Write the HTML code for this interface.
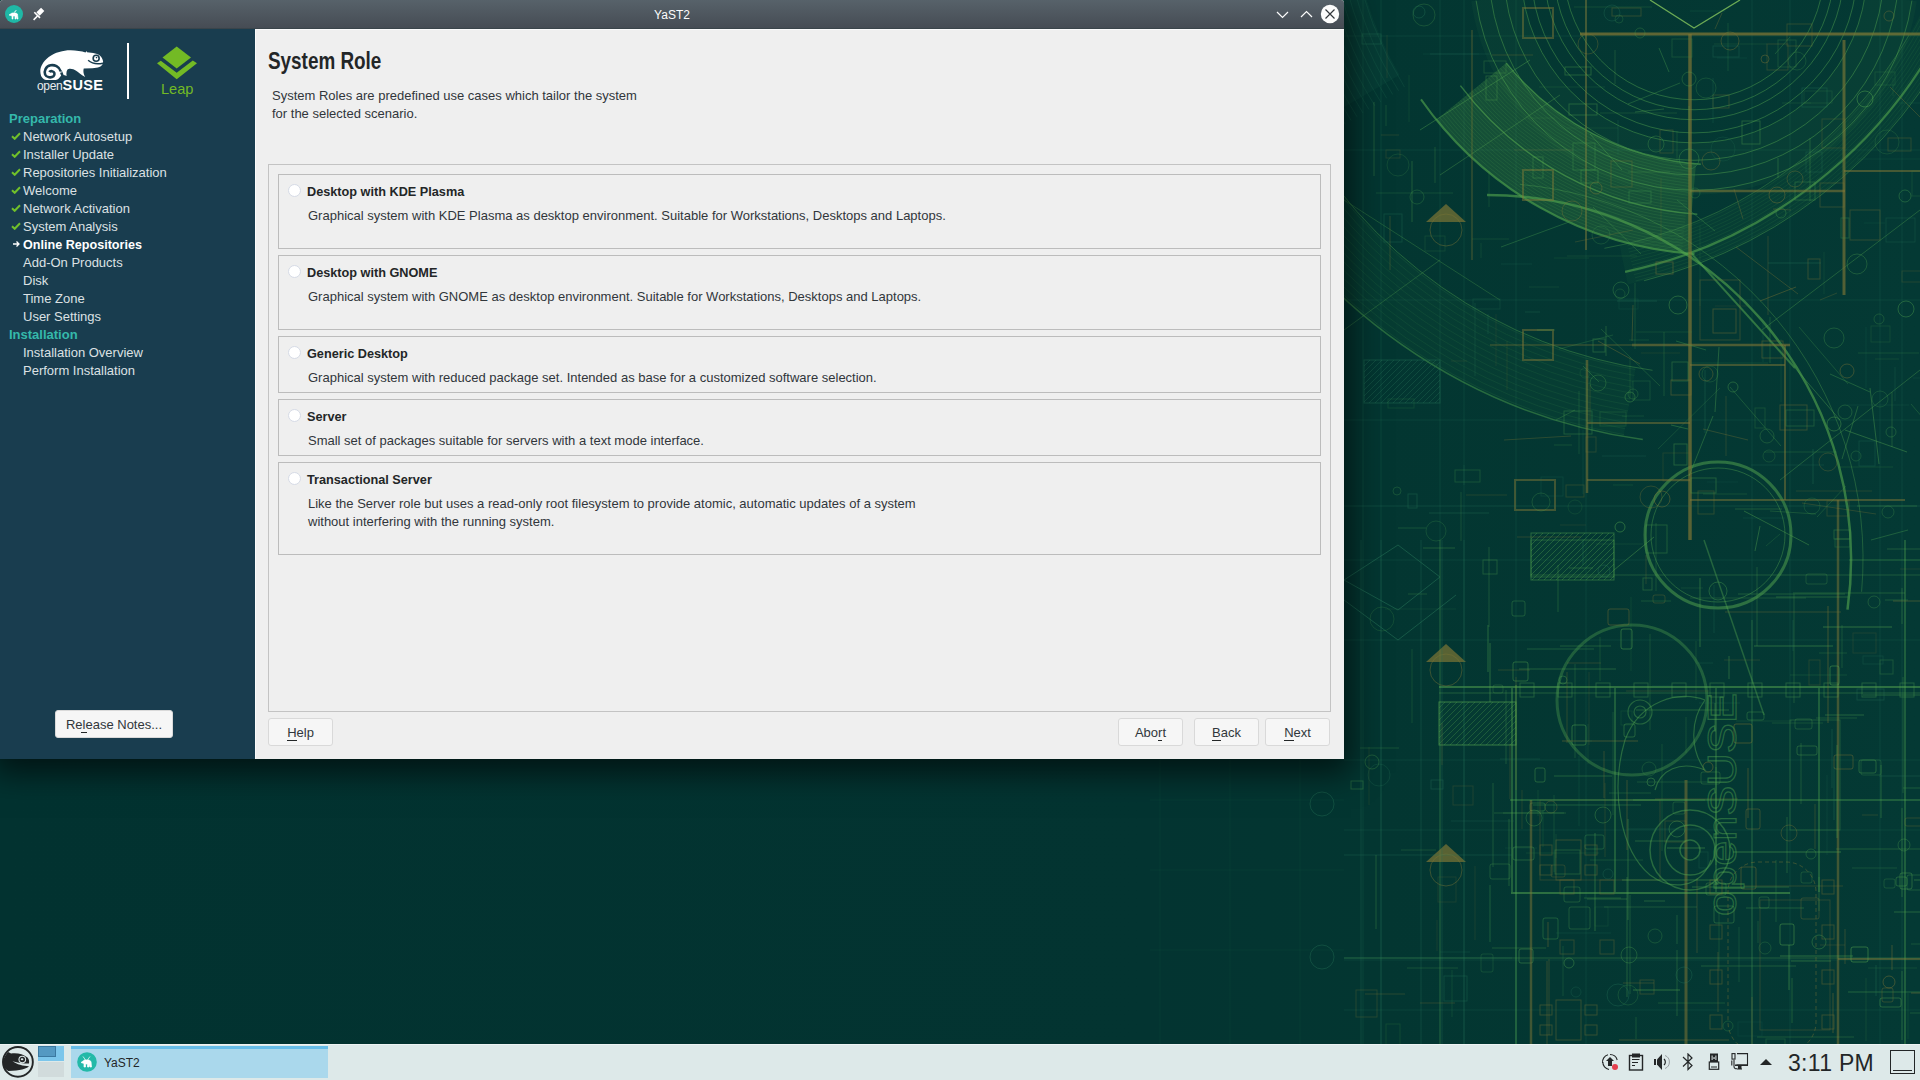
<!DOCTYPE html>
<html><head><meta charset="utf-8">
<style>
*{margin:0;padding:0;box-sizing:border-box}
html,body{width:1920px;height:1080px;overflow:hidden}
body{position:relative;background:#03312f;font-family:"Liberation Sans",sans-serif;font-size:13px;color:#31363b}
#wall{position:absolute;left:0;top:0;width:1920px;height:1044px}
#shadow{position:absolute;left:0;top:0;width:1344px;height:759px;box-shadow:0 7px 30px 7px rgba(0,0,0,0.6)}
#win{position:absolute;left:0;top:0;width:1344px;height:759px;background:#efefef;border-radius:3px 3px 0 0;overflow:hidden}
#tb{position:absolute;left:0;top:0;width:1344px;height:29px;background:linear-gradient(#57626a,#464c54);border-bottom:1px solid #3a444a}
#tb .title{position:absolute;left:0;width:1344px;top:0px;height:28px;line-height:30px;text-align:center;color:#fcfcfc;font-size:12px}
#side{position:absolute;left:0;top:29px;width:255px;height:730px;background:#193d4f}
#main{position:absolute;left:255px;top:29px;width:1089px;height:730px;background:#efefef;border-top:1px solid #fafafa;border-left:1px solid #fafafa}
.nav{position:absolute;padding-top:1px;left:23px;color:#dce1e4;font-size:13px;line-height:18px;white-space:nowrap}
.hd{position:absolute;padding-top:1px;left:9px;color:#35b9ab;font-weight:bold;font-size:13px;line-height:18px}
.cur{color:#fff;font-weight:bold;font-size:12.6px}
.chk{position:absolute;left:11px;width:10px;height:8px}
.frame{position:absolute;left:268px;top:164px;width:1063px;height:548px;border:1px solid #c3c3c3}
.box{position:absolute;left:278px;width:1043px;border:1px solid #bcbcbc}
.radio{position:absolute;left:288px;width:13px;height:13px;border-radius:50%;background:#fff;border:1px solid #d6dbe6}
.rt{position:absolute;padding-top:1px;left:307px;font-weight:bold;font-size:12.7px;color:#232627;line-height:18px;white-space:nowrap}
.rd{position:absolute;padding-top:1px;left:308px;color:#31363b;line-height:18px;white-space:nowrap}
.btn{position:absolute;height:28px;width:65px;background:#f6f6f6;border:1px solid #d9d9d9;border-radius:3px;text-align:center;line-height:27px;color:#31363b}
.btn u{text-decoration:none;display:inline-block;border-bottom:1px solid #232627;line-height:14px}
#task{position:absolute;left:0;top:1044px;width:1920px;height:36px;background:#dde9e9}
</style></head><body>
<svg id="wall" width="1920" height="1044" viewBox="0 0 1920 1044">
<defs>
<linearGradient id="bgg" x1="0" y1="0" x2="1920" y2="0" gradientUnits="userSpaceOnUse">
<stop offset="0" stop-color="#023230"/><stop offset="0.6" stop-color="#033431"/><stop offset="0.72" stop-color="#033631"/><stop offset="1" stop-color="#043934"/>
</linearGradient>
</defs>
<rect width="1920" height="1044" fill="url(#bgg)"/>
<clipPath id="cp1531_540"><rect x="1531" y="540" width="83" height="37"/></clipPath>
<clipPath id="cp1439_702"><rect x="1439" y="702" width="77" height="43"/></clipPath>
<clipPath id="cp1364_360"><rect x="1364" y="360" width="76" height="43"/></clipPath>
<clipPath id="cp1531_533"><rect x="1531" y="533" width="83" height="47"/></clipPath>
<line x1="1363" y1="0" x2="1363" y2="1044" stroke="#2a7a5c" stroke-width="1" stroke-opacity="0.22"/>
<line x1="1381" y1="0" x2="1381" y2="1044" stroke="#2a7a5c" stroke-width="1" stroke-opacity="0.22"/>
<line x1="1440" y1="0" x2="1440" y2="1044" stroke="#2a7a5c" stroke-width="1" stroke-opacity="0.22"/>
<line x1="1464" y1="0" x2="1464" y2="1044" stroke="#2a7a5c" stroke-width="1" stroke-opacity="0.22"/>
<line x1="1516" y1="0" x2="1516" y2="1044" stroke="#2a7a5c" stroke-width="1" stroke-opacity="0.22"/>
<line x1="1586" y1="0" x2="1586" y2="1044" stroke="#2a7a5c" stroke-width="1" stroke-opacity="0.22"/>
<line x1="1752" y1="0" x2="1752" y2="1044" stroke="#2a7a5c" stroke-width="1" stroke-opacity="0.22"/>
<line x1="1790" y1="0" x2="1790" y2="1044" stroke="#2a7a5c" stroke-width="1" stroke-opacity="0.22"/>
<line x1="1880" y1="0" x2="1880" y2="1044" stroke="#2a7a5c" stroke-width="1" stroke-opacity="0.22"/>
<line x1="1902" y1="0" x2="1902" y2="1044" stroke="#2a7a5c" stroke-width="1" stroke-opacity="0.22"/>
<line x1="1344" y1="36" x2="1920" y2="36" stroke="#2a7a5c" stroke-width="1" stroke-opacity="0.2"/>
<line x1="1344" y1="150" x2="1920" y2="150" stroke="#2a7a5c" stroke-width="1" stroke-opacity="0.2"/>
<line x1="1344" y1="300" x2="1920" y2="300" stroke="#2a7a5c" stroke-width="1" stroke-opacity="0.2"/>
<line x1="1344" y1="420" x2="1920" y2="420" stroke="#2a7a5c" stroke-width="1" stroke-opacity="0.2"/>
<line x1="1344" y1="560" x2="1920" y2="560" stroke="#2a7a5c" stroke-width="1" stroke-opacity="0.2"/>
<line x1="1344" y1="640" x2="1920" y2="640" stroke="#2a7a5c" stroke-width="1" stroke-opacity="0.2"/>
<line x1="1344" y1="760" x2="1920" y2="760" stroke="#2a7a5c" stroke-width="1" stroke-opacity="0.2"/>
<line x1="1344" y1="830" x2="1920" y2="830" stroke="#2a7a5c" stroke-width="1" stroke-opacity="0.2"/>
<line x1="1344" y1="960" x2="1920" y2="960" stroke="#2a7a5c" stroke-width="1" stroke-opacity="0.2"/>
<line x1="1344" y1="1010" x2="1920" y2="1010" stroke="#2a7a5c" stroke-width="1" stroke-opacity="0.2"/>
<line x1="1160" y1="760" x2="1160" y2="1044" stroke="#2a7a5c" stroke-width="1" stroke-opacity="0.1"/>
<line x1="1230" y1="760" x2="1230" y2="1044" stroke="#2a7a5c" stroke-width="1" stroke-opacity="0.1"/>
<line x1="1300" y1="760" x2="1300" y2="1044" stroke="#2a7a5c" stroke-width="1" stroke-opacity="0.1"/>
<line x1="1150" y1="800" x2="1344" y2="800" stroke="#2a7a5c" stroke-width="1" stroke-opacity="0.1"/>
<line x1="1150" y1="870" x2="1344" y2="870" stroke="#2a7a5c" stroke-width="1" stroke-opacity="0.1"/>
<line x1="1150" y1="950" x2="1344" y2="950" stroke="#2a7a5c" stroke-width="1" stroke-opacity="0.1"/>
<circle cx="1322" cy="804" r="12" fill="none" stroke="#2a7a5c" stroke-width="1" stroke-opacity="0.35"/>
<circle cx="1322" cy="957" r="12" fill="none" stroke="#2a7a5c" stroke-width="1" stroke-opacity="0.35"/>
<path d="M1399.6 75.0 A370 370 0 0 1 1355.6 -45.8 L1276.8 -31.9 A450 450 0 0 0 1330.3 115.0 Z" fill="#2a7a5c" fill-opacity="0.1"/>
<path d="M1404.5 87.1 A372 372 0 0 1 1353.7 -45.4" fill="none" stroke="#2a7a5c" stroke-width="1" stroke-opacity="0.2"/>
<path d="M1398.6 90.8 A379 379 0 0 1 1346.8 -44.2" fill="none" stroke="#2a7a5c" stroke-width="1" stroke-opacity="0.2"/>
<path d="M1392.7 94.5 A386 386 0 0 1 1339.9 -43.0" fill="none" stroke="#2a7a5c" stroke-width="1" stroke-opacity="0.2"/>
<path d="M1386.7 98.3 A393 393 0 0 1 1333.0 -41.8" fill="none" stroke="#2a7a5c" stroke-width="1" stroke-opacity="0.2"/>
<path d="M1380.8 102.0 A400 400 0 0 1 1326.1 -40.5" fill="none" stroke="#2a7a5c" stroke-width="1" stroke-opacity="0.2"/>
<path d="M1374.8 105.7 A407 407 0 0 1 1319.2 -39.3" fill="none" stroke="#2a7a5c" stroke-width="1" stroke-opacity="0.2"/>
<path d="M1368.9 109.4 A414 414 0 0 1 1312.3 -38.1" fill="none" stroke="#2a7a5c" stroke-width="1" stroke-opacity="0.2"/>
<path d="M1363.0 113.1 A421 421 0 0 1 1305.4 -36.9" fill="none" stroke="#2a7a5c" stroke-width="1" stroke-opacity="0.2"/>
<path d="M1357.0 116.8 A428 428 0 0 1 1298.5 -35.7" fill="none" stroke="#2a7a5c" stroke-width="1" stroke-opacity="0.2"/>
<path d="M1351.1 120.5 A435 435 0 0 1 1291.6 -34.5" fill="none" stroke="#2a7a5c" stroke-width="1" stroke-opacity="0.2"/>
<path d="M1345.2 124.2 A442 442 0 0 1 1284.7 -33.2" fill="none" stroke="#2a7a5c" stroke-width="1" stroke-opacity="0.2"/>
<path d="M1339.2 127.9 A449 449 0 0 1 1277.8 -32.0" fill="none" stroke="#2a7a5c" stroke-width="1" stroke-opacity="0.2"/>
<path d="M1696.0 164.0 A275 275 0 0 1 1506.3 63.1 L1436.3 119.7 A365 365 0 0 0 1688.2 253.6 Z" fill="#55a84f" fill-opacity="0.16"/>
<path d="M1691.0 165.5 A277 277 0 0 1 1504.7 64.3" fill="none" stroke="#3f8f4a" stroke-width="1" stroke-opacity="0.22"/>
<path d="M1690.7 168.5 A280 280 0 0 1 1502.4 66.2" fill="none" stroke="#3f8f4a" stroke-width="1" stroke-opacity="0.22"/>
<path d="M1690.4 171.4 A283 283 0 0 1 1500.1 68.1" fill="none" stroke="#3f8f4a" stroke-width="1" stroke-opacity="0.22"/>
<path d="M1690.1 174.4 A286 286 0 0 1 1497.7 70.0" fill="none" stroke="#3f8f4a" stroke-width="1" stroke-opacity="0.22"/>
<path d="M1689.8 177.4 A289 289 0 0 1 1495.4 71.9" fill="none" stroke="#3f8f4a" stroke-width="1" stroke-opacity="0.22"/>
<path d="M1689.5 180.4 A292 292 0 0 1 1493.1 73.8" fill="none" stroke="#3f8f4a" stroke-width="1" stroke-opacity="0.22"/>
<path d="M1689.2 183.4 A295 295 0 0 1 1490.7 75.6" fill="none" stroke="#3f8f4a" stroke-width="1" stroke-opacity="0.22"/>
<path d="M1688.9 186.4 A298 298 0 0 1 1488.4 77.5" fill="none" stroke="#3f8f4a" stroke-width="1" stroke-opacity="0.22"/>
<path d="M1688.5 189.4 A301 301 0 0 1 1486.1 79.4" fill="none" stroke="#3f8f4a" stroke-width="1" stroke-opacity="0.22"/>
<path d="M1688.2 192.3 A304 304 0 0 1 1483.7 81.3" fill="none" stroke="#3f8f4a" stroke-width="1" stroke-opacity="0.22"/>
<path d="M1687.9 195.3 A307 307 0 0 1 1481.4 83.2" fill="none" stroke="#3f8f4a" stroke-width="1" stroke-opacity="0.22"/>
<path d="M1687.6 198.3 A310 310 0 0 1 1479.1 85.1" fill="none" stroke="#3f8f4a" stroke-width="1" stroke-opacity="0.22"/>
<path d="M1687.3 201.3 A313 313 0 0 1 1476.8 87.0" fill="none" stroke="#3f8f4a" stroke-width="1" stroke-opacity="0.22"/>
<path d="M1687.0 204.3 A316 316 0 0 1 1474.4 88.9" fill="none" stroke="#3f8f4a" stroke-width="1" stroke-opacity="0.22"/>
<path d="M1686.7 207.3 A319 319 0 0 1 1472.1 90.8" fill="none" stroke="#3f8f4a" stroke-width="1" stroke-opacity="0.22"/>
<path d="M1686.3 210.2 A322 322 0 0 1 1469.8 92.6" fill="none" stroke="#3f8f4a" stroke-width="1" stroke-opacity="0.22"/>
<path d="M1686.0 213.2 A325 325 0 0 1 1467.4 94.5" fill="none" stroke="#3f8f4a" stroke-width="1" stroke-opacity="0.22"/>
<path d="M1685.7 216.2 A328 328 0 0 1 1465.1 96.4" fill="none" stroke="#3f8f4a" stroke-width="1" stroke-opacity="0.22"/>
<path d="M1685.4 219.2 A331 331 0 0 1 1462.8 98.3" fill="none" stroke="#3f8f4a" stroke-width="1" stroke-opacity="0.22"/>
<path d="M1685.1 222.2 A334 334 0 0 1 1460.4 100.2" fill="none" stroke="#3f8f4a" stroke-width="1" stroke-opacity="0.22"/>
<path d="M1684.8 225.2 A337 337 0 0 1 1458.1 102.1" fill="none" stroke="#3f8f4a" stroke-width="1" stroke-opacity="0.22"/>
<path d="M1684.5 228.1 A340 340 0 0 1 1455.8 104.0" fill="none" stroke="#3f8f4a" stroke-width="1" stroke-opacity="0.22"/>
<path d="M1684.1 231.1 A343 343 0 0 1 1453.4 105.9" fill="none" stroke="#3f8f4a" stroke-width="1" stroke-opacity="0.22"/>
<path d="M1683.8 234.1 A346 346 0 0 1 1451.1 107.7" fill="none" stroke="#3f8f4a" stroke-width="1" stroke-opacity="0.22"/>
<path d="M1683.5 237.1 A349 349 0 0 1 1448.8 109.6" fill="none" stroke="#3f8f4a" stroke-width="1" stroke-opacity="0.22"/>
<path d="M1683.2 240.1 A352 352 0 0 1 1446.4 111.5" fill="none" stroke="#3f8f4a" stroke-width="1" stroke-opacity="0.22"/>
<path d="M1682.9 243.1 A355 355 0 0 1 1444.1 113.4" fill="none" stroke="#3f8f4a" stroke-width="1" stroke-opacity="0.22"/>
<path d="M1682.6 246.0 A358 358 0 0 1 1441.8 115.3" fill="none" stroke="#3f8f4a" stroke-width="1" stroke-opacity="0.22"/>
<path d="M1682.3 249.0 A361 361 0 0 1 1439.5 117.2" fill="none" stroke="#3f8f4a" stroke-width="1" stroke-opacity="0.22"/>
<path d="M1682.0 252.0 A364 364 0 0 1 1437.1 119.1" fill="none" stroke="#3f8f4a" stroke-width="1" stroke-opacity="0.22"/>
<path d="M1700.8 164.3 A275 275 0 0 1 1506.3 63.1" fill="none" stroke="#55a84f" stroke-width="1.5" stroke-opacity="0.6"/>
<path d="M1697.3 214.2 A325 325 0 0 1 1460.4 85.6" fill="none" stroke="#55a84f" stroke-width="1.5" stroke-opacity="0.55"/>
<path d="M1694.5 254.1 A365 365 0 0 1 1421.0 99.4" fill="none" stroke="#55a84f" stroke-width="2" stroke-opacity="0.6"/>
<path d="M1635.8 367.6 A485 485 0 0 1 1300.0 132.5 L1239.4 167.5 A555 555 0 0 0 1623.6 436.6 Z" fill="#55a84f" fill-opacity="0.05"/>
<path d="M1635.4 369.6 A487 487 0 0 1 1298.2 133.5" fill="none" stroke="#3f8f4a" stroke-width="1" stroke-opacity="0.15"/>
<path d="M1634.4 375.5 A493 493 0 0 1 1293.0 136.5" fill="none" stroke="#3f8f4a" stroke-width="1" stroke-opacity="0.15"/>
<path d="M1633.3 381.4 A499 499 0 0 1 1287.9 139.5" fill="none" stroke="#3f8f4a" stroke-width="1" stroke-opacity="0.15"/>
<path d="M1632.3 387.3 A505 505 0 0 1 1282.7 142.5" fill="none" stroke="#3f8f4a" stroke-width="1" stroke-opacity="0.15"/>
<path d="M1631.3 393.2 A511 511 0 0 1 1277.5 145.5" fill="none" stroke="#3f8f4a" stroke-width="1" stroke-opacity="0.15"/>
<path d="M1630.2 399.1 A517 517 0 0 1 1272.3 148.5" fill="none" stroke="#3f8f4a" stroke-width="1" stroke-opacity="0.15"/>
<path d="M1629.2 405.1 A523 523 0 0 1 1267.1 151.5" fill="none" stroke="#3f8f4a" stroke-width="1" stroke-opacity="0.15"/>
<path d="M1628.1 411.0 A529 529 0 0 1 1261.9 154.5" fill="none" stroke="#3f8f4a" stroke-width="1" stroke-opacity="0.15"/>
<path d="M1627.1 416.9 A535 535 0 0 1 1256.7 157.5" fill="none" stroke="#3f8f4a" stroke-width="1" stroke-opacity="0.15"/>
<path d="M1626.1 422.8 A541 541 0 0 1 1251.5 160.5" fill="none" stroke="#3f8f4a" stroke-width="1" stroke-opacity="0.15"/>
<path d="M1625.0 428.7 A547 547 0 0 1 1246.3 163.5" fill="none" stroke="#3f8f4a" stroke-width="1" stroke-opacity="0.15"/>
<path d="M1624.0 434.6 A553 553 0 0 1 1241.1 166.5" fill="none" stroke="#3f8f4a" stroke-width="1" stroke-opacity="0.15"/>
<path d="M1642.8 439.6 A555 555 0 0 1 1230.0 150.6" fill="none" stroke="#55a84f" stroke-width="1.5" stroke-opacity="0.45"/>
<path d="M1652.5 370.3 A485 485 0 0 1 1291.8 117.7" fill="none" stroke="#55a84f" stroke-width="1" stroke-opacity="0.4"/>
<path d="M1822.7 -11.9 A130 130 0 0 1 1565.3 -11.9" fill="none" stroke="#55a84f" stroke-width="1" stroke-opacity="0.45"/>
<path d="M1832.6 -10.5 A140 140 0 0 1 1555.4 -10.5" fill="none" stroke="#55a84f" stroke-width="1" stroke-opacity="0.45"/>
<path d="M1842.5 -9.1 A150 150 0 0 1 1545.5 -9.1" fill="none" stroke="#55a84f" stroke-width="1" stroke-opacity="0.45"/>
<path d="M1855.4 -7.3 A163 163 0 0 1 1532.6 -7.3" fill="none" stroke="#55a84f" stroke-width="1" stroke-opacity="0.45"/>
<path d="M1865.3 -5.9 A173 173 0 0 1 1522.7 -5.9" fill="none" stroke="#55a84f" stroke-width="1" stroke-opacity="0.45"/>
<path d="M1882.2 -3.6 A190 190 0 0 1 1505.8 -3.6" fill="none" stroke="#55a84f" stroke-width="1" stroke-opacity="0.45"/>
<path d="M1897.0 -1.5 A205 205 0 0 1 1491.0 -1.5" fill="none" stroke="#55a84f" stroke-width="1" stroke-opacity="0.45"/>
<path d="M1911.9 0.6 A220 220 0 0 1 1476.1 0.6" fill="none" stroke="#55a84f" stroke-width="1" stroke-opacity="0.45"/>
<path d="M1961.0 -10.1 A467 467 0 0 1 1625.1 271.8" fill="none" stroke="#55a84f" stroke-width="2.2" stroke-opacity="0.6"/>
<path d="M1973.0 -5.2 A480 480 0 0 1 1644.1 280.7" fill="none" stroke="#55a84f" stroke-width="1" stroke-opacity="0.4"/>
<path d="M1909.1 35.0 A440 440 0 0 1 1604.4 248.3" fill="none" stroke="#55a84f" stroke-width="1" stroke-opacity="0.35"/>
<path d="M1487.0 195.0 A364 364 0 0 1 1847.5 609.7" fill="none" stroke="#55a84f" stroke-width="2.5" stroke-opacity="0.6"/>
<path d="M1519.8 184.4 A376 376 0 0 1 1861.6 591.8" fill="none" stroke="#55a84f" stroke-width="1" stroke-opacity="0.35"/>
<circle cx="1718" cy="535" r="73" fill="none" stroke="#55a84f" stroke-width="3" stroke-opacity="0.5"/>
<circle cx="1718" cy="535" r="67" fill="none" stroke="#55a84f" stroke-width="1" stroke-opacity="0.4"/>
<circle cx="1632" cy="700" r="75" fill="none" stroke="#55a84f" stroke-width="3" stroke-opacity="0.35"/>
<line x1="1691" y1="253" x2="1795" y2="368" stroke="#55a84f" stroke-width="2" stroke-opacity="0.55"/>
<line x1="1795" y1="368" x2="1840" y2="420" stroke="#55a84f" stroke-width="1" stroke-opacity="0.4"/>
<line x1="1704" y1="540" x2="1764" y2="715" stroke="#55a84f" stroke-width="1.5" stroke-opacity="0.4"/>
<line x1="1420" y1="130" x2="1530" y2="60" stroke="#55a84f" stroke-width="1" stroke-opacity="0.4"/>
<line x1="1440" y1="175" x2="1560" y2="95" stroke="#55a84f" stroke-width="1" stroke-opacity="0.35"/>
<line x1="1762" y1="330" x2="1920" y2="210" stroke="#55a84f" stroke-width="1" stroke-opacity="0.35"/>
<line x1="1780" y1="480" x2="1920" y2="370" stroke="#55a84f" stroke-width="1" stroke-opacity="0.35"/>
<line x1="1344" y1="200" x2="1500" y2="300" stroke="#55a84f" stroke-width="1" stroke-opacity="0.3"/>
<line x1="1344" y1="330" x2="1440" y2="260" stroke="#55a84f" stroke-width="1" stroke-opacity="0.3"/>
<line x1="1580" y1="34" x2="1920" y2="34" stroke="#7d7535" stroke-width="3" stroke-opacity="0.75"/>
<line x1="1690" y1="34" x2="1690" y2="540" stroke="#7d7535" stroke-width="3.5" stroke-opacity="0.7"/>
<line x1="1844" y1="40" x2="1844" y2="295" stroke="#7d7535" stroke-width="3" stroke-opacity="0.65"/>
<line x1="1690" y1="191" x2="1845" y2="191" stroke="#7d7535" stroke-width="2.5" stroke-opacity="0.6"/>
<line x1="1844" y1="171" x2="1920" y2="171" stroke="#7d7535" stroke-width="2" stroke-opacity="0.55"/>
<line x1="1586" y1="0" x2="1586" y2="250" stroke="#7d7535" stroke-width="2" stroke-opacity="0.5"/>
<line x1="1472" y1="30" x2="1472" y2="260" stroke="#7d7535" stroke-width="1.5" stroke-opacity="0.4"/>
<line x1="1632" y1="345" x2="1790" y2="345" stroke="#7d7535" stroke-width="2.5" stroke-opacity="0.6"/>
<line x1="1690" y1="365" x2="1785" y2="365" stroke="#7d7535" stroke-width="2" stroke-opacity="0.5"/>
<line x1="1785" y1="345" x2="1785" y2="500" stroke="#7d7535" stroke-width="2" stroke-opacity="0.5"/>
<line x1="1690" y1="500" x2="1905" y2="500" stroke="#7d7535" stroke-width="2" stroke-opacity="0.5"/>
<line x1="1838" y1="500" x2="1838" y2="810" stroke="#7d7535" stroke-width="2.5" stroke-opacity="0.5"/>
<line x1="1490" y1="345" x2="1632" y2="345" stroke="#7d7535" stroke-width="1.5" stroke-opacity="0.4"/>
<rect x="1523" y="8" width="30" height="30" fill="none" fill-opacity="0" stroke="#7d7535" stroke-width="2" stroke-opacity="0.5"/>
<rect x="1523" y="170" width="30" height="30" fill="none" fill-opacity="0" stroke="#7d7535" stroke-width="2" stroke-opacity="0.5"/>
<rect x="1523" y="330" width="30" height="30" fill="none" fill-opacity="0" stroke="#7d7535" stroke-width="2" stroke-opacity="0.5"/>
<rect x="1515" y="480" width="40" height="30" fill="none" fill-opacity="0" stroke="#7d7535" stroke-width="2" stroke-opacity="0.5"/>
<rect x="1700" y="280" width="40" height="60" fill="none" fill-opacity="0" stroke="#7d7535" stroke-width="1" stroke-opacity="0.35"/>
<rect x="1850" y="210" width="30" height="30" fill="none" fill-opacity="0" stroke="#7d7535" stroke-width="1" stroke-opacity="0.35"/>
<line x1="1439" y1="687" x2="1920" y2="687" stroke="#55a84f" stroke-width="2" stroke-opacity="0.5"/>
<line x1="1439" y1="693" x2="1920" y2="693" stroke="#55a84f" stroke-width="1" stroke-opacity="0.35"/>
<line x1="1516" y1="685" x2="1516" y2="1044" stroke="#55a84f" stroke-width="1.5" stroke-opacity="0.45"/>
<line x1="1440" y1="540" x2="1440" y2="1044" stroke="#55a84f" stroke-width="1" stroke-opacity="0.35"/>
<line x1="1686" y1="780" x2="1686" y2="1044" stroke="#7d7535" stroke-width="3" stroke-opacity="0.55"/>
<line x1="1838" y1="810" x2="1838" y2="1044" stroke="#7d7535" stroke-width="2.5" stroke-opacity="0.5"/>
<line x1="1905" y1="540" x2="1905" y2="1044" stroke="#55a84f" stroke-width="1.5" stroke-opacity="0.45"/>
<line x1="1752" y1="620" x2="1752" y2="1044" stroke="#55a84f" stroke-width="1" stroke-opacity="0.35"/>
<line x1="1511" y1="893" x2="1790" y2="893" stroke="#55a84f" stroke-width="2" stroke-opacity="0.5"/>
<line x1="1344" y1="958" x2="1920" y2="958" stroke="#55a84f" stroke-width="1" stroke-opacity="0.35"/>
<line x1="1838" y1="959" x2="1920" y2="959" stroke="#7d7535" stroke-width="2" stroke-opacity="0.5"/>
<line x1="1530" y1="575" x2="1920" y2="575" stroke="#55a84f" stroke-width="1" stroke-opacity="0.3"/>
<rect x="1439" y="702" width="77" height="43" fill="#55a84f" fill-opacity="0.04" stroke="#55a84f" stroke-width="1" stroke-opacity="0.3"/>
<rect x="1531" y="540" width="83" height="37" fill="#55a84f" fill-opacity="0.04" stroke="#55a84f" stroke-width="1" stroke-opacity="0.3"/>
<rect x="1540" y="800" width="120" height="80" fill="none" fill-opacity="0" stroke="#7d7535" stroke-width="1" stroke-opacity="0.3"/>
<rect x="1790" y="720" width="50" height="110" fill="none" fill-opacity="0" stroke="#55a84f" stroke-width="1" stroke-opacity="0.3"/>
<rect x="1760" y="900" width="70" height="130" fill="none" fill-opacity="0" stroke="#7d7535" stroke-width="1" stroke-opacity="0.3"/>
<rect x="1560" y="880" width="14" height="14" fill="none" fill-opacity="0" stroke="#7d7535" stroke-width="1" stroke-opacity="0.35"/>
<rect x="1560" y="940" width="14" height="14" fill="none" fill-opacity="0" stroke="#7d7535" stroke-width="1" stroke-opacity="0.35"/>
<rect x="1600" y="880" width="14" height="14" fill="none" fill-opacity="0" stroke="#7d7535" stroke-width="1" stroke-opacity="0.35"/>
<rect x="1600" y="940" width="14" height="14" fill="none" fill-opacity="0" stroke="#7d7535" stroke-width="1" stroke-opacity="0.35"/>
<rect x="1640" y="980" width="14" height="14" fill="none" fill-opacity="0" stroke="#7d7535" stroke-width="1" stroke-opacity="0.35"/>
<path d="M1344 580 L1398 545 L1440 577 L1398 610 Z M1344 600 L1398 640 L1456 595" fill="none" stroke="#2a7a5c" stroke-width="1" stroke-opacity="0.5"/>
<circle cx="1690" cy="850" r="40" fill="none" stroke="#55a84f" stroke-width="1.5" stroke-opacity="0.45"/>
<circle cx="1690" cy="850" r="25" fill="none" stroke="#55a84f" stroke-width="1.5" stroke-opacity="0.45"/>
<circle cx="1690" cy="850" r="10" fill="none" stroke="#55a84f" stroke-width="1.5" stroke-opacity="0.45"/>
<path d="M1426 222 L1446 204 L1466 222" fill="#7d7535" fill-opacity="0.7"/>
<circle cx="1446" cy="230" r="16" fill="none" stroke="#7d7535" stroke-width="1" stroke-opacity="0.45"/>
<path d="M1426 662 L1446 644 L1466 662" fill="#7d7535" fill-opacity="0.7"/>
<circle cx="1446" cy="670" r="16" fill="none" stroke="#7d7535" stroke-width="1" stroke-opacity="0.45"/>
<path d="M1426 862 L1446 844 L1466 862" fill="#7d7535" fill-opacity="0.7"/>
<circle cx="1446" cy="870" r="16" fill="none" stroke="#7d7535" stroke-width="1" stroke-opacity="0.45"/>
<path d="M1650 0 L1694 28 L1740 0" fill="none" stroke="#8fd060" stroke-width="1.3" stroke-opacity="0.75"/>
<path d="M1936.0 -20.2 A440 440 0 0 1 1619.5 245.4 L1627.8 284.5 A480 480 0 0 0 1973.0 -5.2 Z" fill="#55a84f" fill-opacity="0.05"/>
<path d="M1931.8 -5.2 A442.0 442.0 0 0 1 1627.4 245.7" fill="none" stroke="#3f8f4a" stroke-width="1" stroke-opacity="0.15"/>
<path d="M1934.8 -3.9 A445.3 445.3 0 0 1 1628.2 248.9" fill="none" stroke="#3f8f4a" stroke-width="1" stroke-opacity="0.15"/>
<path d="M1937.8 -2.5 A448.6 448.6 0 0 1 1628.9 252.1" fill="none" stroke="#3f8f4a" stroke-width="1" stroke-opacity="0.15"/>
<path d="M1940.8 -1.2 A451.9 451.9 0 0 1 1629.7 255.3" fill="none" stroke="#3f8f4a" stroke-width="1" stroke-opacity="0.15"/>
<path d="M1943.8 0.1 A455.2 455.2 0 0 1 1630.4 258.5" fill="none" stroke="#3f8f4a" stroke-width="1" stroke-opacity="0.15"/>
<path d="M1946.9 1.5 A458.5 458.5 0 0 1 1631.1 261.7" fill="none" stroke="#3f8f4a" stroke-width="1" stroke-opacity="0.15"/>
<path d="M1949.9 2.8 A461.8 461.8 0 0 1 1631.9 265.0" fill="none" stroke="#3f8f4a" stroke-width="1" stroke-opacity="0.15"/>
<path d="M1952.9 4.2 A465.1 465.1 0 0 1 1632.6 268.2" fill="none" stroke="#3f8f4a" stroke-width="1" stroke-opacity="0.15"/>
<path d="M1955.9 5.5 A468.4 468.4 0 0 1 1633.4 271.4" fill="none" stroke="#3f8f4a" stroke-width="1" stroke-opacity="0.15"/>
<path d="M1958.9 6.9 A471.7 471.7 0 0 1 1634.1 274.6" fill="none" stroke="#3f8f4a" stroke-width="1" stroke-opacity="0.15"/>
<path d="M1961.9 8.2 A475.0 475.0 0 0 1 1634.9 277.8" fill="none" stroke="#3f8f4a" stroke-width="1" stroke-opacity="0.15"/>
<path d="M1964.9 9.5 A478.3 478.3 0 0 1 1635.6 281.0" fill="none" stroke="#3f8f4a" stroke-width="1" stroke-opacity="0.15"/>
<path d="M1865.3 -5.9 A173 173 0 0 1 1522.7 -5.9 L1471.2 1.3 A225 225 0 0 0 1916.8 1.3 Z" fill="#55a84f" fill-opacity="0.06"/>
<path d="M1696.0 164.0 A275 275 0 0 1 1506.3 63.1 L1436.3 119.7 A365 365 0 0 0 1688.2 253.6 Z" fill="#55a84f" fill-opacity="0.08"/>
<circle cx="1677" cy="829" r="8" fill="none" stroke="#55a84f" stroke-opacity="0.36"/>
<line x1="1563" y1="946" x2="1563" y2="996" stroke="#3f8f4a" stroke-opacity="0.27"/>
<rect x="1519" y="949" width="14" height="14" rx="2" fill="none" stroke="#55a84f" stroke-opacity="0.40"/>
<rect x="1801" y="872" width="11" height="11" rx="2" fill="none" stroke="#55a84f" stroke-opacity="0.26"/>
<line x1="1493" y1="783" x2="1493" y2="867" stroke="#3f8f4a" stroke-opacity="0.38"/>
<line x1="1697" y1="878" x2="1697" y2="953" stroke="#7d7535" stroke-opacity="0.35"/>
<line x1="1885" y1="600" x2="1908" y2="600" stroke="#3f8f4a" stroke-opacity="0.38"/>
<line x1="1725" y1="612" x2="1841" y2="612" stroke="#7d7535" stroke-opacity="0.35"/>
<line x1="1849" y1="560" x2="1920" y2="560" stroke="#55a84f" stroke-opacity="0.37"/>
<rect x="1653" y="595" width="12" height="8" rx="2" fill="none" stroke="#7d7535" stroke-opacity="0.33"/>
<line x1="1658" y1="1003" x2="1725" y2="1003" stroke="#55a84f" stroke-opacity="0.25"/>
<line x1="1692" y1="887" x2="1789" y2="887" stroke="#3f8f4a" stroke-opacity="0.50"/>
<line x1="1662" y1="744" x2="1662" y2="851" stroke="#3f8f4a" stroke-opacity="0.25"/>
<circle cx="1904" cy="845" r="6" fill="none" stroke="#55a84f" stroke-opacity="0.30"/>
<line x1="1852" y1="868" x2="1897" y2="868" stroke="#3f8f4a" stroke-opacity="0.30"/>
<line x1="1816" y1="718" x2="1857" y2="718" stroke="#55a84f" stroke-opacity="0.27"/>
<line x1="1757" y1="567" x2="1757" y2="646" stroke="#55a84f" stroke-opacity="0.28"/>
<line x1="1842" y1="625" x2="1842" y2="668" stroke="#3f8f4a" stroke-opacity="0.33"/>
<line x1="1746" y1="908" x2="1804" y2="908" stroke="#3f8f4a" stroke-opacity="0.42"/>
<line x1="1690" y1="598" x2="1806" y2="598" stroke="#55a84f" stroke-opacity="0.26"/>
<line x1="1584" y1="898" x2="1621" y2="898" stroke="#55a84f" stroke-opacity="0.32"/>
<line x1="1793" y1="593" x2="1905" y2="593" stroke="#55a84f" stroke-opacity="0.32"/>
<line x1="1569" y1="568" x2="1593" y2="568" stroke="#55a84f" stroke-opacity="0.31"/>
<circle cx="1603" cy="815" r="8" fill="none" stroke="#55a84f" stroke-opacity="0.34"/>
<rect x="1907" y="875" width="21" height="15" rx="2" fill="none" stroke="#3f8f4a" stroke-opacity="0.40"/>
<line x1="1636" y1="710" x2="1729" y2="710" stroke="#55a84f" stroke-opacity="0.37"/>
<line x1="1619" y1="1040" x2="1729" y2="1040" stroke="#7d7535" stroke-opacity="0.43"/>
<rect x="1801" y="898" width="18" height="21" rx="2" fill="none" stroke="#7d7535" stroke-opacity="0.34"/>
<rect x="1859" y="760" width="17" height="13" rx="2" fill="none" stroke="#55a84f" stroke-opacity="0.39"/>
<line x1="1733" y1="852" x2="1841" y2="852" stroke="#55a84f" stroke-opacity="0.50"/>
<rect x="1797" y="746" width="20" height="9" rx="2" fill="none" stroke="#55a84f" stroke-opacity="0.36"/>
<rect x="1806" y="574" width="21" height="10" rx="2" fill="none" stroke="#55a84f" stroke-opacity="0.26"/>
<line x1="1819" y1="877" x2="1819" y2="911" stroke="#55a84f" stroke-opacity="0.34"/>
<rect x="1746" y="809" width="14" height="20" rx="2" fill="none" stroke="#7d7535" stroke-opacity="0.41"/>
<line x1="1622" y1="880" x2="1718" y2="880" stroke="#55a84f" stroke-opacity="0.45"/>
<line x1="1567" y1="663" x2="1601" y2="663" stroke="#7d7535" stroke-opacity="0.30"/>
<line x1="1633" y1="990" x2="1680" y2="990" stroke="#55a84f" stroke-opacity="0.49"/>
<line x1="1554" y1="776" x2="1612" y2="776" stroke="#3f8f4a" stroke-opacity="0.46"/>
<rect x="1706" y="883" width="20" height="12" rx="2" fill="none" stroke="#55a84f" stroke-opacity="0.33"/>
<line x1="1744" y1="886" x2="1843" y2="886" stroke="#7d7535" stroke-opacity="0.33"/>
<line x1="1488" y1="625" x2="1488" y2="672" stroke="#55a84f" stroke-opacity="0.44"/>
<circle cx="1819" cy="942" r="7" fill="none" stroke="#55a84f" stroke-opacity="0.36"/>
<circle cx="1765" cy="948" r="6" fill="none" stroke="#3f8f4a" stroke-opacity="0.30"/>
<line x1="1558" y1="565" x2="1558" y2="612" stroke="#55a84f" stroke-opacity="0.29"/>
<line x1="1630" y1="895" x2="1630" y2="994" stroke="#3f8f4a" stroke-opacity="0.35"/>
<circle cx="1874" cy="602" r="6" fill="none" stroke="#55a84f" stroke-opacity="0.28"/>
<line x1="1752" y1="997" x2="1752" y2="1044" stroke="#7d7535" stroke-opacity="0.37"/>
<rect x="1569" y="907" width="21" height="22" rx="2" fill="none" stroke="#55a84f" stroke-opacity="0.30"/>
<rect x="1905" y="818" width="18" height="8" rx="2" fill="none" stroke="#7d7535" stroke-opacity="0.32"/>
<line x1="1700" y1="578" x2="1700" y2="647" stroke="#55a84f" stroke-opacity="0.44"/>
<line x1="1492" y1="948" x2="1546" y2="948" stroke="#55a84f" stroke-opacity="0.29"/>
<line x1="1823" y1="627" x2="1892" y2="627" stroke="#55a84f" stroke-opacity="0.49"/>
<line x1="1893" y1="601" x2="1920" y2="601" stroke="#7d7535" stroke-opacity="0.46"/>
<circle cx="1551" cy="807" r="6" fill="none" stroke="#7d7535" stroke-opacity="0.33"/>
<line x1="1848" y1="992" x2="1920" y2="992" stroke="#3f8f4a" stroke-opacity="0.49"/>
<line x1="1729" y1="656" x2="1729" y2="679" stroke="#55a84f" stroke-opacity="0.40"/>
<line x1="1902" y1="808" x2="1902" y2="897" stroke="#55a84f" stroke-opacity="0.37"/>
<line x1="1509" y1="819" x2="1509" y2="886" stroke="#55a84f" stroke-opacity="0.32"/>
<rect x="1535" y="768" width="10" height="14" rx="2" fill="none" stroke="#55a84f" stroke-opacity="0.38"/>
<rect x="1493" y="685" width="10" height="8" rx="2" fill="none" stroke="#55a84f" stroke-opacity="0.26"/>
<line x1="1604" y1="907" x2="1697" y2="907" stroke="#55a84f" stroke-opacity="0.28"/>
<line x1="1533" y1="805" x2="1641" y2="805" stroke="#3f8f4a" stroke-opacity="0.43"/>
<rect x="1490" y="864" width="20" height="15" rx="2" fill="none" stroke="#3f8f4a" stroke-opacity="0.38"/>
<line x1="1575" y1="664" x2="1575" y2="758" stroke="#3f8f4a" stroke-opacity="0.31"/>
<line x1="1833" y1="993" x2="1833" y2="1033" stroke="#7d7535" stroke-opacity="0.47"/>
<line x1="1819" y1="653" x2="1847" y2="653" stroke="#3f8f4a" stroke-opacity="0.28"/>
<circle cx="1649" cy="769" r="7" fill="none" stroke="#3f8f4a" stroke-opacity="0.30"/>
<line x1="1828" y1="606" x2="1828" y2="723" stroke="#7d7535" stroke-opacity="0.48"/>
<rect x="1530" y="803" width="15" height="8" rx="2" fill="none" stroke="#3f8f4a" stroke-opacity="0.45"/>
<circle cx="1811" cy="854" r="5" fill="none" stroke="#55a84f" stroke-opacity="0.29"/>
<circle cx="1569" cy="963" r="5" fill="none" stroke="#55a84f" stroke-opacity="0.39"/>
<line x1="1776" y1="597" x2="1848" y2="597" stroke="#55a84f" stroke-opacity="0.37"/>
<line x1="1667" y1="848" x2="1705" y2="848" stroke="#55a84f" stroke-opacity="0.46"/>
<line x1="1677" y1="915" x2="1677" y2="944" stroke="#3f8f4a" stroke-opacity="0.40"/>
<line x1="1825" y1="715" x2="1864" y2="715" stroke="#55a84f" stroke-opacity="0.39"/>
<rect x="1734" y="724" width="18" height="19" rx="2" fill="none" stroke="#7d7535" stroke-opacity="0.48"/>
<rect x="1834" y="755" width="19" height="14" rx="2" fill="none" stroke="#7d7535" stroke-opacity="0.44"/>
<line x1="1794" y1="594" x2="1794" y2="703" stroke="#55a84f" stroke-opacity="0.28"/>
<line x1="1911" y1="993" x2="1920" y2="993" stroke="#7d7535" stroke-opacity="0.49"/>
<line x1="1627" y1="877" x2="1627" y2="997" stroke="#55a84f" stroke-opacity="0.35"/>
<rect x="1759" y="897" width="10" height="11" rx="2" fill="none" stroke="#55a84f" stroke-opacity="0.28"/>
<rect x="1673" y="802" width="12" height="12" rx="2" fill="none" stroke="#55a84f" stroke-opacity="0.25"/>
<line x1="1628" y1="819" x2="1628" y2="920" stroke="#55a84f" stroke-opacity="0.41"/>
<rect x="1513" y="847" width="21" height="13" rx="2" fill="none" stroke="#55a84f" stroke-opacity="0.35"/>
<line x1="1902" y1="971" x2="1902" y2="1040" stroke="#55a84f" stroke-opacity="0.36"/>
<line x1="1604" y1="751" x2="1604" y2="798" stroke="#7d7535" stroke-opacity="0.37"/>
<rect x="1884" y="879" width="11" height="9" rx="2" fill="none" stroke="#55a84f" stroke-opacity="0.25"/>
<line x1="1548" y1="922" x2="1548" y2="947" stroke="#7d7535" stroke-opacity="0.44"/>
<line x1="1910" y1="1013" x2="1920" y2="1013" stroke="#3f8f4a" stroke-opacity="0.36"/>
<line x1="1903" y1="677" x2="1903" y2="793" stroke="#55a84f" stroke-opacity="0.29"/>
<line x1="1587" y1="899" x2="1627" y2="899" stroke="#55a84f" stroke-opacity="0.36"/>
<line x1="1503" y1="813" x2="1564" y2="813" stroke="#55a84f" stroke-opacity="0.28"/>
<rect x="1741" y="867" width="15" height="22" rx="2" fill="none" stroke="#7d7535" stroke-opacity="0.44"/>
<line x1="1894" y1="912" x2="1920" y2="912" stroke="#55a84f" stroke-opacity="0.38"/>
<line x1="1701" y1="966" x2="1796" y2="966" stroke="#3f8f4a" stroke-opacity="0.41"/>
<circle cx="1563" cy="680" r="4" fill="none" stroke="#3f8f4a" stroke-opacity="0.47"/>
<line x1="1506" y1="690" x2="1506" y2="764" stroke="#55a84f" stroke-opacity="0.28"/>
<rect x="1512" y="601" width="13" height="15" rx="2" fill="none" stroke="#3f8f4a" stroke-opacity="0.41"/>
<rect x="1572" y="725" width="14" height="20" rx="2" fill="none" stroke="#55a84f" stroke-opacity="0.45"/>
<line x1="1845" y1="929" x2="1845" y2="964" stroke="#7d7535" stroke-opacity="0.35"/>
<line x1="1547" y1="961" x2="1547" y2="1044" stroke="#7d7535" stroke-opacity="0.39"/>
<line x1="1881" y1="765" x2="1881" y2="818" stroke="#55a84f" stroke-opacity="0.37"/>
<line x1="1716" y1="767" x2="1716" y2="865" stroke="#55a84f" stroke-opacity="0.32"/>
<rect x="1513" y="662" width="15" height="19" rx="2" fill="none" stroke="#55a84f" stroke-opacity="0.42"/>
<line x1="1623" y1="983" x2="1654" y2="983" stroke="#7d7535" stroke-opacity="0.34"/>
<circle cx="1789" cy="833" r="8" fill="none" stroke="#7d7535" stroke-opacity="0.36"/>
<line x1="1613" y1="712" x2="1613" y2="815" stroke="#3f8f4a" stroke-opacity="0.27"/>
<line x1="1490" y1="885" x2="1490" y2="942" stroke="#3f8f4a" stroke-opacity="0.43"/>
<line x1="1650" y1="634" x2="1650" y2="730" stroke="#3f8f4a" stroke-opacity="0.29"/>
<line x1="1863" y1="695" x2="1920" y2="695" stroke="#55a84f" stroke-opacity="0.39"/>
<rect x="1900" y="873" width="12" height="16" rx="2" fill="none" stroke="#55a84f" stroke-opacity="0.40"/>
<line x1="1626" y1="691" x2="1709" y2="691" stroke="#7d7535" stroke-opacity="0.27"/>
<rect x="1543" y="918" width="15" height="21" rx="2" fill="none" stroke="#3f8f4a" stroke-opacity="0.43"/>
<line x1="1627" y1="780" x2="1627" y2="850" stroke="#7d7535" stroke-opacity="0.42"/>
<rect x="1714" y="906" width="20" height="17" rx="2" fill="none" stroke="#55a84f" stroke-opacity="0.35"/>
<rect x="1851" y="947" width="17" height="15" rx="2" fill="none" stroke="#55a84f" stroke-opacity="0.49"/>
<line x1="1789" y1="945" x2="1789" y2="990" stroke="#55a84f" stroke-opacity="0.48"/>
<rect x="1551" y="865" width="14" height="12" rx="2" fill="none" stroke="#7d7535" stroke-opacity="0.30"/>
<line x1="1902" y1="588" x2="1902" y2="624" stroke="#55a84f" stroke-opacity="0.33"/>
<rect x="1880" y="998" width="21" height="9" rx="2" fill="none" stroke="#55a84f" stroke-opacity="0.40"/>
<line x1="1527" y1="649" x2="1594" y2="649" stroke="#3f8f4a" stroke-opacity="0.40"/>
<rect x="1701" y="772" width="19" height="12" rx="2" fill="none" stroke="#55a84f" stroke-opacity="0.29"/>
<line x1="1718" y1="952" x2="1718" y2="1012" stroke="#7d7535" stroke-opacity="0.37"/>
<rect x="1896" y="877" width="11" height="9" rx="2" fill="none" stroke="#55a84f" stroke-opacity="0.37"/>
<line x1="1892" y1="945" x2="1892" y2="970" stroke="#7d7535" stroke-opacity="0.45"/>
<rect x="1882" y="988" width="11" height="14" rx="2" fill="none" stroke="#7d7535" stroke-opacity="0.36"/>
<rect x="1861" y="760" width="20" height="15" rx="2" fill="none" stroke="#3f8f4a" stroke-opacity="0.31"/>
<line x1="1757" y1="1037" x2="1854" y2="1037" stroke="#55a84f" stroke-opacity="0.29"/>
<rect x="1481" y="954" width="12" height="18" rx="2" fill="none" stroke="#3f8f4a" stroke-opacity="0.27"/>
<line x1="1522" y1="790" x2="1522" y2="829" stroke="#7d7535" stroke-opacity="0.25"/>
<rect x="1564" y="887" width="16" height="15" rx="2" fill="none" stroke="#55a84f" stroke-opacity="0.30"/>
<line x1="1549" y1="959" x2="1549" y2="1035" stroke="#7d7535" stroke-opacity="0.35"/>
<line x1="1914" y1="880" x2="1920" y2="880" stroke="#55a84f" stroke-opacity="0.42"/>
<circle cx="1651" cy="782" r="4" fill="none" stroke="#55a84f" stroke-opacity="0.41"/>
<line x1="1644" y1="901" x2="1665" y2="901" stroke="#55a84f" stroke-opacity="0.36"/>
<line x1="1911" y1="944" x2="1920" y2="944" stroke="#3f8f4a" stroke-opacity="0.32"/>
<line x1="1715" y1="703" x2="1715" y2="732" stroke="#55a84f" stroke-opacity="0.39"/>
<line x1="1562" y1="741" x2="1638" y2="741" stroke="#7d7535" stroke-opacity="0.49"/>
<rect x="1795" y="719" width="17" height="10" rx="2" fill="none" stroke="#55a84f" stroke-opacity="0.28"/>
<line x1="1754" y1="646" x2="1833" y2="646" stroke="#55a84f" stroke-opacity="0.46"/>
<line x1="1519" y1="669" x2="1616" y2="669" stroke="#55a84f" stroke-opacity="0.36"/>
<circle cx="1629" cy="955" r="8" fill="none" stroke="#3f8f4a" stroke-opacity="0.41"/>
<line x1="1837" y1="745" x2="1837" y2="838" stroke="#55a84f" stroke-opacity="0.41"/>
<rect x="1747" y="712" width="17" height="8" rx="2" fill="none" stroke="#3f8f4a" stroke-opacity="0.42"/>
<rect x="1624" y="724" width="11" height="13" rx="2" fill="none" stroke="#55a84f" stroke-opacity="0.39"/>
<rect x="1608" y="609" width="21" height="16" rx="2" fill="none" stroke="#7d7535" stroke-opacity="0.44"/>
<line x1="1633" y1="800" x2="1705" y2="800" stroke="#3f8f4a" stroke-opacity="0.50"/>
<line x1="1791" y1="961" x2="1831" y2="961" stroke="#55a84f" stroke-opacity="0.41"/>
<line x1="1516" y1="677" x2="1516" y2="790" stroke="#7d7535" stroke-opacity="0.33"/>
<line x1="1637" y1="782" x2="1714" y2="782" stroke="#3f8f4a" stroke-opacity="0.31"/>
<circle cx="1718" cy="591" r="9" fill="none" stroke="#3f8f4a" stroke-opacity="0.48"/>
<line x1="1836" y1="849" x2="1920" y2="849" stroke="#55a84f" stroke-opacity="0.32"/>
<rect x="1585" y="835" width="19" height="14" rx="2" fill="none" stroke="#3f8f4a" stroke-opacity="0.40"/>
<circle cx="1655" cy="936" r="7" fill="none" stroke="#3f8f4a" stroke-opacity="0.33"/>
<line x1="1801" y1="743" x2="1801" y2="804" stroke="#55a84f" stroke-opacity="0.29"/>
<line x1="1494" y1="813" x2="1566" y2="813" stroke="#55a84f" stroke-opacity="0.29"/>
<line x1="1595" y1="833" x2="1595" y2="931" stroke="#55a84f" stroke-opacity="0.43"/>
<line x1="1655" y1="799" x2="1738" y2="799" stroke="#7d7535" stroke-opacity="0.35"/>
<rect x="1780" y="924" width="14" height="21" rx="2" fill="none" stroke="#55a84f" stroke-opacity="0.47"/>
<line x1="1780" y1="956" x2="1853" y2="956" stroke="#55a84f" stroke-opacity="0.48"/>
<circle cx="1708" cy="767" r="5" fill="none" stroke="#7d7535" stroke-opacity="0.48"/>
<line x1="1748" y1="768" x2="1748" y2="818" stroke="#7d7535" stroke-opacity="0.44"/>
<line x1="1738" y1="594" x2="1845" y2="594" stroke="#55a84f" stroke-opacity="0.31"/>
<line x1="1903" y1="788" x2="1920" y2="788" stroke="#3f8f4a" stroke-opacity="0.39"/>
<circle cx="1889" cy="982" r="6" fill="none" stroke="#7d7535" stroke-opacity="0.47"/>
<rect x="1830" y="666" width="9" height="19" rx="2" fill="none" stroke="#55a84f" stroke-opacity="0.48"/>
<circle cx="1534" cy="818" r="8" fill="none" stroke="#55a84f" stroke-opacity="0.32"/>
<line x1="1490" y1="643" x2="1490" y2="702" stroke="#55a84f" stroke-opacity="0.45"/>
<line x1="1635" y1="841" x2="1686" y2="841" stroke="#55a84f" stroke-opacity="0.36"/>
<rect x="1621" y="629" width="11" height="20" rx="2" fill="none" stroke="#55a84f" stroke-opacity="0.47"/>
<circle cx="1888" cy="512" r="6" fill="none" stroke="#55a84f" stroke-opacity="0.25"/>
<circle cx="1695" cy="193" r="5" fill="none" stroke="#3f8f4a" stroke-opacity="0.34"/>
<line x1="1722" y1="13" x2="1715" y2="29" stroke="#7d7535" stroke-opacity="0.35"/>
<line x1="1713" y1="416" x2="1689" y2="476" stroke="#55a84f" stroke-opacity="0.37"/>
<circle cx="1905" cy="196" r="6" fill="none" stroke="#3f8f4a" stroke-opacity="0.44"/>
<circle cx="1906" cy="309" r="8" fill="none" stroke="#55a84f" stroke-opacity="0.39"/>
<line x1="1719" y1="347" x2="1715" y2="412" stroke="#55a84f" stroke-opacity="0.36"/>
<rect x="1767" y="44" width="21" height="26" fill="none" stroke="#7d7535" stroke-opacity="0.31"/>
<line x1="1677" y1="200" x2="1715" y2="231" stroke="#3f8f4a" stroke-opacity="0.43"/>
<line x1="1613" y1="335" x2="1559" y2="349" stroke="#3f8f4a" stroke-opacity="0.30"/>
<line x1="1770" y1="511" x2="1816" y2="514" stroke="#55a84f" stroke-opacity="0.26"/>
<circle cx="1847" cy="371" r="7" fill="none" stroke="#7d7535" stroke-opacity="0.44"/>
<line x1="1911" y1="404" x2="1923" y2="418" stroke="#3f8f4a" stroke-opacity="0.35"/>
<rect x="1755" y="408" width="10" height="20" fill="none" stroke="#3f8f4a" stroke-opacity="0.29"/>
<circle cx="1620" cy="294" r="5" fill="none" stroke="#3f8f4a" stroke-opacity="0.27"/>
<rect x="1564" y="411" width="28" height="23" fill="none" stroke="#3f8f4a" stroke-opacity="0.41"/>
<circle cx="1706" cy="374" r="7" fill="none" stroke="#7d7535" stroke-opacity="0.40"/>
<circle cx="1711" cy="161" r="9" fill="none" stroke="#7d7535" stroke-opacity="0.36"/>
<line x1="1598" y1="341" x2="1640" y2="364" stroke="#7d7535" stroke-opacity="0.40"/>
<rect x="1795" y="182" width="20" height="18" fill="none" stroke="#55a84f" stroke-opacity="0.30"/>
<line x1="1720" y1="388" x2="1658" y2="449" stroke="#3f8f4a" stroke-opacity="0.25"/>
<line x1="1703" y1="429" x2="1748" y2="440" stroke="#7d7535" stroke-opacity="0.34"/>
<rect x="1808" y="259" width="12" height="20" fill="none" stroke="#7d7535" stroke-opacity="0.39"/>
<line x1="1654" y1="537" x2="1614" y2="570" stroke="#55a84f" stroke-opacity="0.42"/>
<line x1="1799" y1="327" x2="1848" y2="384" stroke="#3f8f4a" stroke-opacity="0.33"/>
<line x1="1890" y1="87" x2="1930" y2="127" stroke="#7d7535" stroke-opacity="0.35"/>
<line x1="1659" y1="48" x2="1669" y2="72" stroke="#3f8f4a" stroke-opacity="0.45"/>
<line x1="1780" y1="534" x2="1766" y2="546" stroke="#3f8f4a" stroke-opacity="0.25"/>
<rect x="1600" y="412" width="26" height="14" fill="none" stroke="#3f8f4a" stroke-opacity="0.26"/>
<circle cx="1689" cy="79" r="7" fill="none" stroke="#55a84f" stroke-opacity="0.29"/>
<circle cx="1777" cy="195" r="8" fill="none" stroke="#7d7535" stroke-opacity="0.43"/>
<circle cx="1620" cy="527" r="5" fill="none" stroke="#55a84f" stroke-opacity="0.45"/>
<line x1="1802" y1="503" x2="1876" y2="514" stroke="#7d7535" stroke-opacity="0.31"/>
<line x1="1575" y1="410" x2="1556" y2="420" stroke="#55a84f" stroke-opacity="0.28"/>
<line x1="1633" y1="230" x2="1575" y2="242" stroke="#7d7535" stroke-opacity="0.29"/>
<line x1="1796" y1="287" x2="1760" y2="301" stroke="#7d7535" stroke-opacity="0.44"/>
<line x1="1908" y1="530" x2="1871" y2="540" stroke="#3f8f4a" stroke-opacity="0.45"/>
<line x1="1734" y1="189" x2="1743" y2="219" stroke="#7d7535" stroke-opacity="0.36"/>
<rect x="1581" y="170" width="17" height="13" fill="none" stroke="#55a84f" stroke-opacity="0.37"/>
<rect x="1672" y="362" width="16" height="19" fill="none" stroke="#55a84f" stroke-opacity="0.33"/>
<rect x="1566" y="485" width="18" height="12" fill="none" stroke="#7d7535" stroke-opacity="0.29"/>
<rect x="1834" y="530" width="16" height="9" fill="none" stroke="#55a84f" stroke-opacity="0.33"/>
<circle cx="1572" cy="211" r="10" fill="none" stroke="#7d7535" stroke-opacity="0.38"/>
<line x1="1870" y1="388" x2="1879" y2="464" stroke="#55a84f" stroke-opacity="0.40"/>
<rect x="1827" y="501" width="22" height="15" fill="none" stroke="#7d7535" stroke-opacity="0.28"/>
<rect x="1780" y="405" width="27" height="25" fill="none" stroke="#7d7535" stroke-opacity="0.38"/>
<rect x="1671" y="380" width="20" height="15" fill="none" stroke="#7d7535" stroke-opacity="0.44"/>
<rect x="1822" y="119" width="23" height="29" fill="none" stroke="#7d7535" stroke-opacity="0.28"/>
<circle cx="1797" cy="61" r="9" fill="none" stroke="#3f8f4a" stroke-opacity="0.27"/>
<circle cx="1588" cy="44" r="10" fill="none" stroke="#7d7535" stroke-opacity="0.35"/>
<rect x="1573" y="143" width="22" height="27" fill="none" stroke="#3f8f4a" stroke-opacity="0.45"/>
<circle cx="1630" cy="397" r="5" fill="none" stroke="#55a84f" stroke-opacity="0.38"/>
<circle cx="1857" cy="264" r="10" fill="none" stroke="#55a84f" stroke-opacity="0.30"/>
<line x1="1773" y1="209" x2="1791" y2="210" stroke="#7d7535" stroke-opacity="0.33"/>
<rect x="1612" y="8" width="29" height="8" fill="none" stroke="#7d7535" stroke-opacity="0.36"/>
<line x1="1736" y1="247" x2="1798" y2="294" stroke="#7d7535" stroke-opacity="0.37"/>
<line x1="1845" y1="430" x2="1907" y2="452" stroke="#55a84f" stroke-opacity="0.41"/>
<line x1="1858" y1="406" x2="1842" y2="459" stroke="#55a84f" stroke-opacity="0.35"/>
<circle cx="1891" cy="432" r="5" fill="none" stroke="#3f8f4a" stroke-opacity="0.38"/>
<circle cx="1767" cy="436" r="7" fill="none" stroke="#55a84f" stroke-opacity="0.27"/>
<line x1="1583" y1="366" x2="1599" y2="382" stroke="#3f8f4a" stroke-opacity="0.40"/>
<rect x="1691" y="478" width="25" height="15" fill="none" stroke="#55a84f" stroke-opacity="0.36"/>
<line x1="1760" y1="526" x2="1755" y2="551" stroke="#55a84f" stroke-opacity="0.40"/>
<rect x="1786" y="410" width="28" height="16" fill="none" stroke="#55a84f" stroke-opacity="0.28"/>
<rect x="1633" y="381" width="17" height="19" fill="none" stroke="#3f8f4a" stroke-opacity="0.27"/>
<rect x="1841" y="218" width="8" height="20" fill="none" stroke="#3f8f4a" stroke-opacity="0.38"/>
<line x1="1790" y1="37" x2="1775" y2="54" stroke="#3f8f4a" stroke-opacity="0.39"/>
<circle cx="1834" cy="338" r="10" fill="none" stroke="#3f8f4a" stroke-opacity="0.38"/>
<rect x="1611" y="161" width="21" height="26" fill="none" stroke="#7d7535" stroke-opacity="0.36"/>
<rect x="1762" y="341" width="21" height="17" fill="none" stroke="#7d7535" stroke-opacity="0.40"/>
<line x1="1680" y1="83" x2="1628" y2="104" stroke="#3f8f4a" stroke-opacity="0.41"/>
<line x1="1730" y1="387" x2="1781" y2="446" stroke="#3f8f4a" stroke-opacity="0.38"/>
<line x1="1601" y1="329" x2="1660" y2="386" stroke="#3f8f4a" stroke-opacity="0.33"/>
<rect x="1593" y="339" width="12" height="13" fill="none" stroke="#3f8f4a" stroke-opacity="0.44"/>
<circle cx="1621" cy="290" r="8" fill="none" stroke="#3f8f4a" stroke-opacity="0.40"/>
<rect x="1820" y="183" width="24" height="24" fill="none" stroke="#7d7535" stroke-opacity="0.34"/>
<circle cx="1879" cy="319" r="5" fill="none" stroke="#55a84f" stroke-opacity="0.26"/>
<circle cx="1601" cy="235" r="9" fill="none" stroke="#3f8f4a" stroke-opacity="0.28"/>
<circle cx="1689" cy="159" r="10" fill="none" stroke="#3f8f4a" stroke-opacity="0.43"/>
<line x1="1633" y1="305" x2="1632" y2="341" stroke="#7d7535" stroke-opacity="0.40"/>
<circle cx="1834" cy="424" r="7" fill="none" stroke="#55a84f" stroke-opacity="0.41"/>
<rect x="1787" y="24" width="25" height="22" fill="none" stroke="#7d7535" stroke-opacity="0.32"/>
<line x1="1837" y1="293" x2="1820" y2="300" stroke="#7d7535" stroke-opacity="0.29"/>
<circle cx="1765" cy="59" r="4" fill="none" stroke="#7d7535" stroke-opacity="0.43"/>
<rect x="1656" y="262" width="17" height="12" fill="none" stroke="#7d7535" stroke-opacity="0.45"/>
<circle cx="1812" cy="506" r="8" fill="none" stroke="#3f8f4a" stroke-opacity="0.27"/>
<circle cx="1656" cy="144" r="8" fill="none" stroke="#55a84f" stroke-opacity="0.30"/>
<line x1="1664" y1="109" x2="1635" y2="112" stroke="#55a84f" stroke-opacity="0.33"/>
<line x1="1846" y1="486" x2="1817" y2="517" stroke="#55a84f" stroke-opacity="0.25"/>
<line x1="1569" y1="222" x2="1501" y2="247" stroke="#3f8f4a" stroke-opacity="0.43"/>
<circle cx="1640" cy="33" r="5" fill="none" stroke="#55a84f" stroke-opacity="0.27"/>
<line x1="1590" y1="134" x2="1622" y2="170" stroke="#55a84f" stroke-opacity="0.39"/>
<circle cx="1733" cy="387" r="5" fill="none" stroke="#55a84f" stroke-opacity="0.36"/>
<rect x="1674" y="444" width="13" height="21" fill="none" stroke="#55a84f" stroke-opacity="0.36"/>
<circle cx="1795" cy="179" r="8" fill="none" stroke="#7d7535" stroke-opacity="0.36"/>
<circle cx="1856" cy="456" r="5" fill="none" stroke="#3f8f4a" stroke-opacity="0.32"/>
<circle cx="1662" cy="499" r="8" fill="none" stroke="#7d7535" stroke-opacity="0.44"/>
<line x1="1671" y1="425" x2="1688" y2="429" stroke="#55a84f" stroke-opacity="0.38"/>
<line x1="1676" y1="341" x2="1706" y2="350" stroke="#3f8f4a" stroke-opacity="0.43"/>
<rect x="1742" y="121" width="18" height="23" fill="none" stroke="#55a84f" stroke-opacity="0.36"/>
<circle cx="1730" cy="41" r="9" fill="none" stroke="#7d7535" stroke-opacity="0.41"/>
<line x1="1571" y1="436" x2="1504" y2="440" stroke="#7d7535" stroke-opacity="0.33"/>
<line x1="1744" y1="511" x2="1809" y2="545" stroke="#55a84f" stroke-opacity="0.42"/>
<circle cx="1880" cy="399" r="8" fill="none" stroke="#3f8f4a" stroke-opacity="0.28"/>
<rect x="1569" y="104" width="28" height="11" fill="none" stroke="#55a84f" stroke-opacity="0.36"/>
<circle cx="1889" cy="16" r="5" fill="none" stroke="#7d7535" stroke-opacity="0.39"/>
<circle cx="1845" cy="412" r="7" fill="none" stroke="#3f8f4a" stroke-opacity="0.40"/>
<circle cx="1596" cy="188" r="6" fill="none" stroke="#7d7535" stroke-opacity="0.43"/>
<circle cx="1828" cy="462" r="9" fill="none" stroke="#7d7535" stroke-opacity="0.31"/>
<rect x="1629" y="191" width="22" height="12" fill="none" stroke="#3f8f4a" stroke-opacity="0.43"/>
<circle cx="1619" cy="19" r="4" fill="none" stroke="#3f8f4a" stroke-opacity="0.27"/>
<line x1="1593" y1="207" x2="1641" y2="254" stroke="#55a84f" stroke-opacity="0.31"/>
<circle cx="1678" cy="305" r="9" fill="none" stroke="#55a84f" stroke-opacity="0.39"/>
<circle cx="1598" cy="383" r="8" fill="none" stroke="#55a84f" stroke-opacity="0.29"/>
<rect x="1713" y="309" width="23" height="24" fill="none" stroke="#7d7535" stroke-opacity="0.42"/>
<circle cx="1781" cy="213" r="5" fill="none" stroke="#3f8f4a" stroke-opacity="0.45"/>
<rect x="1565" y="67" width="26" height="8" fill="none" stroke="#55a84f" stroke-opacity="0.37"/>
<circle cx="1865" cy="99" r="8" fill="none" stroke="#55a84f" stroke-opacity="0.45"/>
<rect x="1698" y="491" width="16" height="23" fill="none" stroke="#7d7535" stroke-opacity="0.32"/>
<line x1="1830" y1="374" x2="1870" y2="392" stroke="#3f8f4a" stroke-opacity="0.44"/>
<line x1="1587" y1="360" x2="1587" y2="493" stroke="#7d7535" stroke-width="2.5" stroke-opacity="0.55"/>
<line x1="1587" y1="423" x2="1690" y2="423" stroke="#7d7535" stroke-width="2" stroke-opacity="0.5"/>
<line x1="1587" y1="480" x2="1690" y2="480" stroke="#7d7535" stroke-width="2" stroke-opacity="0.5"/>
<line x1="1340" y1="506" x2="1920" y2="506" stroke="#2a7a5c" stroke-width="1" stroke-opacity="0.3"/>
<rect x="1531" y="533" width="83" height="47" fill="none" stroke="#55a84f" stroke-opacity="0.44999999999999996"/>
<line x1="1531" y1="533" x2="1484" y2="580" stroke="#55a84f" stroke-opacity="0.35" clip-path="url(#cp1531_533)"/>
<line x1="1537" y1="533" x2="1490" y2="580" stroke="#55a84f" stroke-opacity="0.35" clip-path="url(#cp1531_533)"/>
<line x1="1543" y1="533" x2="1496" y2="580" stroke="#55a84f" stroke-opacity="0.35" clip-path="url(#cp1531_533)"/>
<line x1="1549" y1="533" x2="1502" y2="580" stroke="#55a84f" stroke-opacity="0.35" clip-path="url(#cp1531_533)"/>
<line x1="1555" y1="533" x2="1508" y2="580" stroke="#55a84f" stroke-opacity="0.35" clip-path="url(#cp1531_533)"/>
<line x1="1561" y1="533" x2="1514" y2="580" stroke="#55a84f" stroke-opacity="0.35" clip-path="url(#cp1531_533)"/>
<line x1="1567" y1="533" x2="1520" y2="580" stroke="#55a84f" stroke-opacity="0.35" clip-path="url(#cp1531_533)"/>
<line x1="1573" y1="533" x2="1526" y2="580" stroke="#55a84f" stroke-opacity="0.35" clip-path="url(#cp1531_533)"/>
<line x1="1579" y1="533" x2="1532" y2="580" stroke="#55a84f" stroke-opacity="0.35" clip-path="url(#cp1531_533)"/>
<line x1="1585" y1="533" x2="1538" y2="580" stroke="#55a84f" stroke-opacity="0.35" clip-path="url(#cp1531_533)"/>
<line x1="1591" y1="533" x2="1544" y2="580" stroke="#55a84f" stroke-opacity="0.35" clip-path="url(#cp1531_533)"/>
<line x1="1597" y1="533" x2="1550" y2="580" stroke="#55a84f" stroke-opacity="0.35" clip-path="url(#cp1531_533)"/>
<line x1="1603" y1="533" x2="1556" y2="580" stroke="#55a84f" stroke-opacity="0.35" clip-path="url(#cp1531_533)"/>
<line x1="1609" y1="533" x2="1562" y2="580" stroke="#55a84f" stroke-opacity="0.35" clip-path="url(#cp1531_533)"/>
<line x1="1615" y1="533" x2="1568" y2="580" stroke="#55a84f" stroke-opacity="0.35" clip-path="url(#cp1531_533)"/>
<line x1="1621" y1="533" x2="1574" y2="580" stroke="#55a84f" stroke-opacity="0.35" clip-path="url(#cp1531_533)"/>
<line x1="1627" y1="533" x2="1580" y2="580" stroke="#55a84f" stroke-opacity="0.35" clip-path="url(#cp1531_533)"/>
<line x1="1633" y1="533" x2="1586" y2="580" stroke="#55a84f" stroke-opacity="0.35" clip-path="url(#cp1531_533)"/>
<line x1="1639" y1="533" x2="1592" y2="580" stroke="#55a84f" stroke-opacity="0.35" clip-path="url(#cp1531_533)"/>
<line x1="1645" y1="533" x2="1598" y2="580" stroke="#55a84f" stroke-opacity="0.35" clip-path="url(#cp1531_533)"/>
<line x1="1651" y1="533" x2="1604" y2="580" stroke="#55a84f" stroke-opacity="0.35" clip-path="url(#cp1531_533)"/>
<line x1="1657" y1="533" x2="1610" y2="580" stroke="#55a84f" stroke-opacity="0.35" clip-path="url(#cp1531_533)"/>
<rect x="1364" y="360" width="76" height="43" fill="none" stroke="#2a7a5c" stroke-opacity="0.4"/>
<line x1="1364" y1="360" x2="1321" y2="403" stroke="#2a7a5c" stroke-opacity="0.3" clip-path="url(#cp1364_360)"/>
<line x1="1370" y1="360" x2="1327" y2="403" stroke="#2a7a5c" stroke-opacity="0.3" clip-path="url(#cp1364_360)"/>
<line x1="1376" y1="360" x2="1333" y2="403" stroke="#2a7a5c" stroke-opacity="0.3" clip-path="url(#cp1364_360)"/>
<line x1="1382" y1="360" x2="1339" y2="403" stroke="#2a7a5c" stroke-opacity="0.3" clip-path="url(#cp1364_360)"/>
<line x1="1388" y1="360" x2="1345" y2="403" stroke="#2a7a5c" stroke-opacity="0.3" clip-path="url(#cp1364_360)"/>
<line x1="1394" y1="360" x2="1351" y2="403" stroke="#2a7a5c" stroke-opacity="0.3" clip-path="url(#cp1364_360)"/>
<line x1="1400" y1="360" x2="1357" y2="403" stroke="#2a7a5c" stroke-opacity="0.3" clip-path="url(#cp1364_360)"/>
<line x1="1406" y1="360" x2="1363" y2="403" stroke="#2a7a5c" stroke-opacity="0.3" clip-path="url(#cp1364_360)"/>
<line x1="1412" y1="360" x2="1369" y2="403" stroke="#2a7a5c" stroke-opacity="0.3" clip-path="url(#cp1364_360)"/>
<line x1="1418" y1="360" x2="1375" y2="403" stroke="#2a7a5c" stroke-opacity="0.3" clip-path="url(#cp1364_360)"/>
<line x1="1424" y1="360" x2="1381" y2="403" stroke="#2a7a5c" stroke-opacity="0.3" clip-path="url(#cp1364_360)"/>
<line x1="1430" y1="360" x2="1387" y2="403" stroke="#2a7a5c" stroke-opacity="0.3" clip-path="url(#cp1364_360)"/>
<line x1="1436" y1="360" x2="1393" y2="403" stroke="#2a7a5c" stroke-opacity="0.3" clip-path="url(#cp1364_360)"/>
<line x1="1442" y1="360" x2="1399" y2="403" stroke="#2a7a5c" stroke-opacity="0.3" clip-path="url(#cp1364_360)"/>
<line x1="1448" y1="360" x2="1405" y2="403" stroke="#2a7a5c" stroke-opacity="0.3" clip-path="url(#cp1364_360)"/>
<line x1="1454" y1="360" x2="1411" y2="403" stroke="#2a7a5c" stroke-opacity="0.3" clip-path="url(#cp1364_360)"/>
<line x1="1460" y1="360" x2="1417" y2="403" stroke="#2a7a5c" stroke-opacity="0.3" clip-path="url(#cp1364_360)"/>
<line x1="1466" y1="360" x2="1423" y2="403" stroke="#2a7a5c" stroke-opacity="0.3" clip-path="url(#cp1364_360)"/>
<line x1="1472" y1="360" x2="1429" y2="403" stroke="#2a7a5c" stroke-opacity="0.3" clip-path="url(#cp1364_360)"/>
<line x1="1478" y1="360" x2="1435" y2="403" stroke="#2a7a5c" stroke-opacity="0.3" clip-path="url(#cp1364_360)"/>
<rect x="1439" y="702" width="77" height="43" fill="none" stroke="#55a84f" stroke-opacity="0.4"/>
<line x1="1439" y1="702" x2="1396" y2="745" stroke="#55a84f" stroke-opacity="0.3" clip-path="url(#cp1439_702)"/>
<line x1="1445" y1="702" x2="1402" y2="745" stroke="#55a84f" stroke-opacity="0.3" clip-path="url(#cp1439_702)"/>
<line x1="1451" y1="702" x2="1408" y2="745" stroke="#55a84f" stroke-opacity="0.3" clip-path="url(#cp1439_702)"/>
<line x1="1457" y1="702" x2="1414" y2="745" stroke="#55a84f" stroke-opacity="0.3" clip-path="url(#cp1439_702)"/>
<line x1="1463" y1="702" x2="1420" y2="745" stroke="#55a84f" stroke-opacity="0.3" clip-path="url(#cp1439_702)"/>
<line x1="1469" y1="702" x2="1426" y2="745" stroke="#55a84f" stroke-opacity="0.3" clip-path="url(#cp1439_702)"/>
<line x1="1475" y1="702" x2="1432" y2="745" stroke="#55a84f" stroke-opacity="0.3" clip-path="url(#cp1439_702)"/>
<line x1="1481" y1="702" x2="1438" y2="745" stroke="#55a84f" stroke-opacity="0.3" clip-path="url(#cp1439_702)"/>
<line x1="1487" y1="702" x2="1444" y2="745" stroke="#55a84f" stroke-opacity="0.3" clip-path="url(#cp1439_702)"/>
<line x1="1493" y1="702" x2="1450" y2="745" stroke="#55a84f" stroke-opacity="0.3" clip-path="url(#cp1439_702)"/>
<line x1="1499" y1="702" x2="1456" y2="745" stroke="#55a84f" stroke-opacity="0.3" clip-path="url(#cp1439_702)"/>
<line x1="1505" y1="702" x2="1462" y2="745" stroke="#55a84f" stroke-opacity="0.3" clip-path="url(#cp1439_702)"/>
<line x1="1511" y1="702" x2="1468" y2="745" stroke="#55a84f" stroke-opacity="0.3" clip-path="url(#cp1439_702)"/>
<line x1="1517" y1="702" x2="1474" y2="745" stroke="#55a84f" stroke-opacity="0.3" clip-path="url(#cp1439_702)"/>
<line x1="1523" y1="702" x2="1480" y2="745" stroke="#55a84f" stroke-opacity="0.3" clip-path="url(#cp1439_702)"/>
<line x1="1529" y1="702" x2="1486" y2="745" stroke="#55a84f" stroke-opacity="0.3" clip-path="url(#cp1439_702)"/>
<line x1="1535" y1="702" x2="1492" y2="745" stroke="#55a84f" stroke-opacity="0.3" clip-path="url(#cp1439_702)"/>
<line x1="1541" y1="702" x2="1498" y2="745" stroke="#55a84f" stroke-opacity="0.3" clip-path="url(#cp1439_702)"/>
<line x1="1547" y1="702" x2="1504" y2="745" stroke="#55a84f" stroke-opacity="0.3" clip-path="url(#cp1439_702)"/>
<line x1="1553" y1="702" x2="1510" y2="745" stroke="#55a84f" stroke-opacity="0.3" clip-path="url(#cp1439_702)"/>
<rect x="1531" y="540" width="83" height="37" fill="none" stroke="#55a84f" stroke-opacity="0.1"/>
<line x1="1531" y1="540" x2="1494" y2="577" stroke="#55a84f" stroke-opacity="0.0" clip-path="url(#cp1531_540)"/>
<line x1="1631" y1="540" x2="1594" y2="577" stroke="#55a84f" stroke-opacity="0.0" clip-path="url(#cp1531_540)"/>
<rect x="1520" y="683" width="14" height="14" fill="none" fill-opacity="0" stroke="#55a84f" stroke-width="1" stroke-opacity="0.35"/>
<rect x="1558" y="683" width="14" height="14" fill="none" fill-opacity="0" stroke="#55a84f" stroke-width="1" stroke-opacity="0.35"/>
<rect x="1596" y="683" width="14" height="14" fill="none" fill-opacity="0" stroke="#55a84f" stroke-width="1" stroke-opacity="0.35"/>
<rect x="1634" y="683" width="14" height="14" fill="none" fill-opacity="0" stroke="#55a84f" stroke-width="1" stroke-opacity="0.35"/>
<rect x="1672" y="683" width="14" height="14" fill="none" fill-opacity="0" stroke="#55a84f" stroke-width="1" stroke-opacity="0.35"/>
<rect x="1710" y="683" width="14" height="14" fill="none" fill-opacity="0" stroke="#55a84f" stroke-width="1" stroke-opacity="0.35"/>
<rect x="1748" y="683" width="14" height="14" fill="none" fill-opacity="0" stroke="#55a84f" stroke-width="1" stroke-opacity="0.35"/>
<rect x="1786" y="683" width="14" height="14" fill="none" fill-opacity="0" stroke="#55a84f" stroke-width="1" stroke-opacity="0.35"/>
<rect x="1824" y="683" width="14" height="14" fill="none" fill-opacity="0" stroke="#55a84f" stroke-width="1" stroke-opacity="0.35"/>
<rect x="1862" y="683" width="14" height="14" fill="none" fill-opacity="0" stroke="#55a84f" stroke-width="1" stroke-opacity="0.35"/>
<rect x="1900" y="683" width="14" height="14" fill="none" fill-opacity="0" stroke="#55a84f" stroke-width="1" stroke-opacity="0.35"/>
<text x="0" y="0" transform="translate(1736 916) rotate(-90)" font-family="Liberation Sans" font-size="40" textLength="223" lengthAdjust="spacingAndGlyphs" fill="none" stroke="#55a84f" stroke-opacity="0.45" stroke-width="1.2">openSUSE</text>
<path d="M1705 700 C1680 690 1640 700 1625 740 C1610 790 1620 850 1650 875 C1670 890 1700 890 1711 860 M1705 700 C1690 720 1690 750 1705 770 C1680 760 1660 770 1655 790" fill="none" stroke="#55a84f" stroke-width="1.2" stroke-opacity="0.45"/>
<circle cx="1640" cy="712" r="12" fill="none" stroke="#55a84f" stroke-width="1.2" stroke-opacity="0.4"/>
<circle cx="1640" cy="712" r="6" fill="none" stroke="#55a84f" stroke-width="1.2" stroke-opacity="0.4"/>
<rect x="1728" y="862" width="88" height="190" rx="30" fill="none" stroke="#7d7535" stroke-opacity="0.45" stroke-dasharray="4 3"/>
<rect x="1710" y="880" width="12" height="14" fill="none" fill-opacity="0" stroke="#7d7535" stroke-width="1" stroke-opacity="0.4"/>
<rect x="1822" y="880" width="12" height="14" fill="none" fill-opacity="0" stroke="#7d7535" stroke-width="1" stroke-opacity="0.4"/>
<rect x="1710" y="925" width="12" height="14" fill="none" fill-opacity="0" stroke="#7d7535" stroke-width="1" stroke-opacity="0.4"/>
<rect x="1822" y="925" width="12" height="14" fill="none" fill-opacity="0" stroke="#7d7535" stroke-width="1" stroke-opacity="0.4"/>
<rect x="1710" y="970" width="12" height="14" fill="none" fill-opacity="0" stroke="#7d7535" stroke-width="1" stroke-opacity="0.4"/>
<rect x="1822" y="970" width="12" height="14" fill="none" fill-opacity="0" stroke="#7d7535" stroke-width="1" stroke-opacity="0.4"/>
<rect x="1710" y="1015" width="12" height="14" fill="none" fill-opacity="0" stroke="#7d7535" stroke-width="1" stroke-opacity="0.4"/>
<rect x="1822" y="1015" width="12" height="14" fill="none" fill-opacity="0" stroke="#7d7535" stroke-width="1" stroke-opacity="0.4"/>
<rect x="1556" y="840" width="25" height="40" fill="none" fill-opacity="0" stroke="#7d7535" stroke-width="1" stroke-opacity="0.4"/>
<rect x="1540" y="845" width="12" height="10" fill="none" fill-opacity="0" stroke="#7d7535" stroke-width="1" stroke-opacity="0.4"/>
<rect x="1585" y="845" width="12" height="10" fill="none" fill-opacity="0" stroke="#7d7535" stroke-width="1" stroke-opacity="0.4"/>
<rect x="1540" y="865" width="12" height="10" fill="none" fill-opacity="0" stroke="#7d7535" stroke-width="1" stroke-opacity="0.4"/>
<rect x="1585" y="865" width="12" height="10" fill="none" fill-opacity="0" stroke="#7d7535" stroke-width="1" stroke-opacity="0.4"/>
<rect x="1556" y="1000" width="25" height="40" fill="none" fill-opacity="0" stroke="#7d7535" stroke-width="1" stroke-opacity="0.4"/>
<rect x="1540" y="1005" width="12" height="10" fill="none" fill-opacity="0" stroke="#7d7535" stroke-width="1" stroke-opacity="0.4"/>
<rect x="1585" y="1005" width="12" height="10" fill="none" fill-opacity="0" stroke="#7d7535" stroke-width="1" stroke-opacity="0.4"/>
<rect x="1540" y="1025" width="12" height="10" fill="none" fill-opacity="0" stroke="#7d7535" stroke-width="1" stroke-opacity="0.4"/>
<rect x="1585" y="1025" width="12" height="10" fill="none" fill-opacity="0" stroke="#7d7535" stroke-width="1" stroke-opacity="0.4"/>
<line x1="1531" y1="800" x2="1531" y2="1044" stroke="#7d7535" stroke-width="2.5" stroke-opacity="0.5"/>
<line x1="1615" y1="688" x2="1615" y2="892" stroke="#55a84f" stroke-width="1.5" stroke-opacity="0.45"/>
<line x1="1716" y1="688" x2="1716" y2="892" stroke="#55a84f" stroke-width="1.5" stroke-opacity="0.4"/>
<line x1="1819" y1="688" x2="1819" y2="892" stroke="#55a84f" stroke-width="1.5" stroke-opacity="0.45"/>
<line x1="1512" y1="688" x2="1512" y2="892" stroke="#55a84f" stroke-width="1.5" stroke-opacity="0.5"/>
<line x1="1361" y1="540" x2="1361" y2="1044" stroke="#2a7a5c" stroke-width="1" stroke-opacity="0.3"/>
<line x1="1381" y1="540" x2="1381" y2="1044" stroke="#2a7a5c" stroke-width="1" stroke-opacity="0.3"/>
<line x1="1421" y1="540" x2="1421" y2="1044" stroke="#2a7a5c" stroke-width="1" stroke-opacity="0.3"/>
<line x1="1442" y1="540" x2="1442" y2="1044" stroke="#2a7a5c" stroke-width="1" stroke-opacity="0.3"/>
<line x1="1464" y1="540" x2="1464" y2="1044" stroke="#2a7a5c" stroke-width="1" stroke-opacity="0.3"/>
<line x1="1344" y1="855" x2="1512" y2="855" stroke="#2a7a5c" stroke-width="1" stroke-opacity="0.3"/>
<line x1="1344" y1="958" x2="1512" y2="958" stroke="#2a7a5c" stroke-width="1" stroke-opacity="0.3"/>
<line x1="1510" y1="800" x2="1920" y2="800" stroke="#55a84f" stroke-width="1.5" stroke-opacity="0.45"/>
<rect x="1533" y="157" width="10" height="21" fill="none" stroke="#55a84f" stroke-opacity="0.31"/>
<line x1="1864" y1="223" x2="1885" y2="223" stroke="#2a7a5c" stroke-opacity="0.16"/>
<line x1="1590" y1="860" x2="1643" y2="860" stroke="#3f8f4a" stroke-opacity="0.28"/>
<line x1="1385" y1="609" x2="1456" y2="609" stroke="#3f8f4a" stroke-opacity="0.16"/>
<line x1="1514" y1="150" x2="1573" y2="150" stroke="#7d7535" stroke-opacity="0.26"/>
<line x1="1408" y1="594" x2="1427" y2="594" stroke="#55a84f" stroke-opacity="0.26"/>
<rect x="1384" y="214" width="18" height="28" fill="none" stroke="#2a7a5c" stroke-opacity="0.31"/>
<line x1="1554" y1="258" x2="1589" y2="258" stroke="#3f8f4a" stroke-opacity="0.17"/>
<line x1="1630" y1="357" x2="1630" y2="399" stroke="#55a84f" stroke-opacity="0.17"/>
<line x1="1778" y1="158" x2="1778" y2="178" stroke="#55a84f" stroke-opacity="0.34"/>
<rect x="1665" y="821" width="21" height="21" fill="none" stroke="#7d7535" stroke-opacity="0.29"/>
<circle cx="1608" cy="874" r="5" fill="none" stroke="#2a7a5c" stroke-opacity="0.29"/>
<line x1="1763" y1="322" x2="1763" y2="362" stroke="#2a7a5c" stroke-opacity="0.21"/>
<line x1="1728" y1="23" x2="1728" y2="71" stroke="#3f8f4a" stroke-opacity="0.27"/>
<rect x="1473" y="299" width="27" height="10" fill="none" stroke="#2a7a5c" stroke-opacity="0.23"/>
<circle cx="1604" cy="571" r="6" fill="none" stroke="#2a7a5c" stroke-opacity="0.32"/>
<circle cx="1585" cy="373" r="5" fill="none" stroke="#3f8f4a" stroke-opacity="0.18"/>
<line x1="1481" y1="243" x2="1481" y2="258" stroke="#3f8f4a" stroke-opacity="0.20"/>
<line x1="1587" y1="384" x2="1587" y2="433" stroke="#3f8f4a" stroke-opacity="0.29"/>
<line x1="1699" y1="703" x2="1740" y2="703" stroke="#2a7a5c" stroke-opacity="0.23"/>
<line x1="1622" y1="416" x2="1644" y2="416" stroke="#3f8f4a" stroke-opacity="0.24"/>
<line x1="1689" y1="106" x2="1689" y2="161" stroke="#55a84f" stroke-opacity="0.34"/>
<line x1="1390" y1="216" x2="1390" y2="270" stroke="#7d7535" stroke-opacity="0.34"/>
<line x1="1618" y1="120" x2="1618" y2="155" stroke="#2a7a5c" stroke-opacity="0.25"/>
<rect x="1431" y="780" width="12" height="9" fill="none" stroke="#2a7a5c" stroke-opacity="0.32"/>
<line x1="1887" y1="549" x2="1922" y2="549" stroke="#55a84f" stroke-opacity="0.30"/>
<rect x="1713" y="95" width="16" height="13" fill="none" stroke="#7d7535" stroke-opacity="0.33"/>
<line x1="1656" y1="523" x2="1656" y2="591" stroke="#3f8f4a" stroke-opacity="0.31"/>
<line x1="1768" y1="236" x2="1768" y2="315" stroke="#7d7535" stroke-opacity="0.30"/>
<line x1="1796" y1="491" x2="1872" y2="491" stroke="#7d7535" stroke-opacity="0.24"/>
<line x1="1908" y1="993" x2="1908" y2="1039" stroke="#3f8f4a" stroke-opacity="0.17"/>
<circle cx="1541" cy="502" r="9" fill="none" stroke="#55a84f" stroke-opacity="0.25"/>
<rect x="1802" y="88" width="25" height="19" fill="none" stroke="#2a7a5c" stroke-opacity="0.31"/>
<line x1="1451" y1="821" x2="1514" y2="821" stroke="#2a7a5c" stroke-opacity="0.24"/>
<circle cx="1398" cy="165" r="11" fill="none" stroke="#55a84f" stroke-opacity="0.18"/>
<rect x="1806" y="152" width="16" height="20" fill="none" stroke="#2a7a5c" stroke-opacity="0.28"/>
<circle cx="1424" cy="15" r="11" fill="none" stroke="#55a84f" stroke-opacity="0.26"/>
<rect x="1595" y="907" width="13" height="19" fill="none" stroke="#3f8f4a" stroke-opacity="0.16"/>
<line x1="1781" y1="339" x2="1781" y2="402" stroke="#3f8f4a" stroke-opacity="0.16"/>
<rect x="1857" y="689" width="27" height="11" fill="none" stroke="#2a7a5c" stroke-opacity="0.32"/>
<circle cx="1436" cy="531" r="10" fill="none" stroke="#3f8f4a" stroke-opacity="0.27"/>
<line x1="1435" y1="147" x2="1435" y2="183" stroke="#55a84f" stroke-opacity="0.26"/>
<rect x="1643" y="578" width="9" height="12" fill="none" stroke="#55a84f" stroke-opacity="0.33"/>
<line x1="1374" y1="102" x2="1374" y2="176" stroke="#55a84f" stroke-opacity="0.30"/>
<line x1="1600" y1="637" x2="1600" y2="681" stroke="#3f8f4a" stroke-opacity="0.29"/>
<circle cx="1651" cy="497" r="11" fill="none" stroke="#7d7535" stroke-opacity="0.33"/>
<line x1="1464" y1="465" x2="1464" y2="485" stroke="#2a7a5c" stroke-opacity="0.24"/>
<rect x="1486" y="76" width="11" height="24" fill="none" stroke="#55a84f" stroke-opacity="0.33"/>
<circle cx="1723" cy="149" r="12" fill="none" stroke="#2a7a5c" stroke-opacity="0.19"/>
<circle cx="1575" cy="507" r="7" fill="none" stroke="#3f8f4a" stroke-opacity="0.18"/>
<line x1="1641" y1="353" x2="1680" y2="353" stroke="#7d7535" stroke-opacity="0.17"/>
<rect x="1541" y="477" width="22" height="19" fill="none" stroke="#2a7a5c" stroke-opacity="0.22"/>
<rect x="1386" y="1024" width="14" height="28" fill="none" stroke="#55a84f" stroke-opacity="0.17"/>
<rect x="1453" y="786" width="20" height="19" fill="none" stroke="#7d7535" stroke-opacity="0.23"/>
<line x1="1629" y1="340" x2="1649" y2="340" stroke="#3f8f4a" stroke-opacity="0.24"/>
<rect x="1880" y="660" width="13" height="14" fill="none" stroke="#55a84f" stroke-opacity="0.27"/>
<circle cx="1419" cy="12" r="6" fill="none" stroke="#2a7a5c" stroke-opacity="0.34"/>
<line x1="1423" y1="548" x2="1455" y2="548" stroke="#55a84f" stroke-opacity="0.34"/>
<line x1="1452" y1="970" x2="1452" y2="1017" stroke="#3f8f4a" stroke-opacity="0.21"/>
<line x1="1451" y1="361" x2="1467" y2="361" stroke="#7d7535" stroke-opacity="0.16"/>
<line x1="1636" y1="1017" x2="1636" y2="1039" stroke="#3f8f4a" stroke-opacity="0.34"/>
<line x1="1813" y1="449" x2="1813" y2="484" stroke="#2a7a5c" stroke-opacity="0.34"/>
<line x1="1472" y1="239" x2="1509" y2="239" stroke="#3f8f4a" stroke-opacity="0.23"/>
<line x1="1381" y1="135" x2="1399" y2="135" stroke="#7d7535" stroke-opacity="0.24"/>
<line x1="1726" y1="396" x2="1726" y2="456" stroke="#7d7535" stroke-opacity="0.27"/>
<line x1="1376" y1="193" x2="1453" y2="193" stroke="#55a84f" stroke-opacity="0.20"/>
<line x1="1900" y1="569" x2="1926" y2="569" stroke="#7d7535" stroke-opacity="0.19"/>
<line x1="1539" y1="87" x2="1605" y2="87" stroke="#3f8f4a" stroke-opacity="0.20"/>
<line x1="1401" y1="850" x2="1436" y2="850" stroke="#55a84f" stroke-opacity="0.23"/>
<circle cx="1706" cy="88" r="10" fill="none" stroke="#3f8f4a" stroke-opacity="0.28"/>
<line x1="1847" y1="405" x2="1909" y2="405" stroke="#2a7a5c" stroke-opacity="0.18"/>
<rect x="1713" y="46" width="26" height="11" fill="none" stroke="#2a7a5c" stroke-opacity="0.30"/>
<rect x="1646" y="525" width="21" height="28" fill="none" stroke="#55a84f" stroke-opacity="0.32"/>
<line x1="1736" y1="721" x2="1792" y2="721" stroke="#55a84f" stroke-opacity="0.16"/>
<line x1="1892" y1="392" x2="1892" y2="447" stroke="#55a84f" stroke-opacity="0.28"/>
<line x1="1735" y1="509" x2="1782" y2="509" stroke="#55a84f" stroke-opacity="0.30"/>
<line x1="1652" y1="686" x2="1672" y2="686" stroke="#2a7a5c" stroke-opacity="0.20"/>
<line x1="1500" y1="759" x2="1540" y2="759" stroke="#2a7a5c" stroke-opacity="0.25"/>
<rect x="1621" y="711" width="11" height="14" fill="none" stroke="#3f8f4a" stroke-opacity="0.17"/>
<line x1="1770" y1="317" x2="1770" y2="363" stroke="#55a84f" stroke-opacity="0.25"/>
<line x1="1899" y1="103" x2="1948" y2="103" stroke="#2a7a5c" stroke-opacity="0.21"/>
<line x1="1613" y1="485" x2="1633" y2="485" stroke="#3f8f4a" stroke-opacity="0.21"/>
<line x1="1617" y1="301" x2="1657" y2="301" stroke="#2a7a5c" stroke-opacity="0.35"/>
<line x1="1868" y1="968" x2="1917" y2="968" stroke="#55a84f" stroke-opacity="0.18"/>
<rect x="1888" y="138" width="23" height="13" fill="none" stroke="#7d7535" stroke-opacity="0.33"/>
<line x1="1857" y1="506" x2="1917" y2="506" stroke="#55a84f" stroke-opacity="0.34"/>
<line x1="1579" y1="756" x2="1579" y2="826" stroke="#2a7a5c" stroke-opacity="0.21"/>
<rect x="1351" y="781" width="12" height="8" fill="none" stroke="#55a84f" stroke-opacity="0.34"/>
<line x1="1768" y1="263" x2="1821" y2="263" stroke="#2a7a5c" stroke-opacity="0.35"/>
<line x1="1554" y1="445" x2="1572" y2="445" stroke="#55a84f" stroke-opacity="0.21"/>
<line x1="1724" y1="660" x2="1760" y2="660" stroke="#7d7535" stroke-opacity="0.24"/>
<line x1="1787" y1="817" x2="1787" y2="873" stroke="#55a84f" stroke-opacity="0.31"/>
<line x1="1866" y1="978" x2="1866" y2="1041" stroke="#55a84f" stroke-opacity="0.16"/>
<line x1="1605" y1="783" x2="1605" y2="857" stroke="#7d7535" stroke-opacity="0.25"/>
<line x1="1661" y1="178" x2="1661" y2="241" stroke="#7d7535" stroke-opacity="0.21"/>
<rect x="1902" y="271" width="23" height="11" fill="none" stroke="#7d7535" stroke-opacity="0.25"/>
<line x1="1713" y1="78" x2="1713" y2="123" stroke="#2a7a5c" stroke-opacity="0.26"/>
<line x1="1538" y1="790" x2="1538" y2="816" stroke="#3f8f4a" stroke-opacity="0.20"/>
<line x1="1664" y1="332" x2="1664" y2="396" stroke="#3f8f4a" stroke-opacity="0.33"/>
<line x1="1583" y1="430" x2="1583" y2="494" stroke="#2a7a5c" stroke-opacity="0.20"/>
<line x1="1631" y1="597" x2="1631" y2="671" stroke="#3f8f4a" stroke-opacity="0.17"/>
<line x1="1567" y1="672" x2="1567" y2="743" stroke="#7d7535" stroke-opacity="0.32"/>
<rect x="1362" y="34" width="19" height="10" fill="none" stroke="#2a7a5c" stroke-opacity="0.34"/>
<line x1="1876" y1="965" x2="1876" y2="996" stroke="#2a7a5c" stroke-opacity="0.34"/>
<line x1="1412" y1="161" x2="1412" y2="222" stroke="#55a84f" stroke-opacity="0.34"/>
<line x1="1716" y1="795" x2="1716" y2="819" stroke="#55a84f" stroke-opacity="0.15"/>
<rect x="1672" y="39" width="20" height="18" fill="none" stroke="#3f8f4a" stroke-opacity="0.28"/>
<line x1="1782" y1="103" x2="1811" y2="103" stroke="#3f8f4a" stroke-opacity="0.23"/>
<line x1="1690" y1="11" x2="1725" y2="11" stroke="#2a7a5c" stroke-opacity="0.21"/>
<line x1="1824" y1="252" x2="1824" y2="294" stroke="#3f8f4a" stroke-opacity="0.16"/>
<line x1="1717" y1="58" x2="1747" y2="58" stroke="#2a7a5c" stroke-opacity="0.17"/>
<line x1="1590" y1="385" x2="1590" y2="424" stroke="#7d7535" stroke-opacity="0.29"/>
<line x1="1574" y1="7" x2="1652" y2="7" stroke="#55a84f" stroke-opacity="0.19"/>
<line x1="1526" y1="853" x2="1599" y2="853" stroke="#3f8f4a" stroke-opacity="0.20"/>
<line x1="1412" y1="649" x2="1412" y2="723" stroke="#3f8f4a" stroke-opacity="0.25"/>
<circle cx="1382" cy="619" r="12" fill="none" stroke="#55a84f" stroke-opacity="0.19"/>
<line x1="1430" y1="54" x2="1491" y2="54" stroke="#2a7a5c" stroke-opacity="0.24"/>
<line x1="1528" y1="118" x2="1555" y2="118" stroke="#3f8f4a" stroke-opacity="0.22"/>
<line x1="1879" y1="776" x2="1958" y2="776" stroke="#2a7a5c" stroke-opacity="0.32"/>
<line x1="1600" y1="113" x2="1677" y2="113" stroke="#55a84f" stroke-opacity="0.22"/>
<line x1="1420" y1="1003" x2="1455" y2="1003" stroke="#7d7535" stroke-opacity="0.30"/>
<rect x="1804" y="91" width="28" height="12" fill="none" stroke="#3f8f4a" stroke-opacity="0.22"/>
<line x1="1556" y1="933" x2="1611" y2="933" stroke="#2a7a5c" stroke-opacity="0.20"/>
<line x1="1579" y1="391" x2="1579" y2="454" stroke="#55a84f" stroke-opacity="0.20"/>
<line x1="1858" y1="353" x2="1919" y2="353" stroke="#55a84f" stroke-opacity="0.20"/>
<line x1="1529" y1="287" x2="1559" y2="287" stroke="#55a84f" stroke-opacity="0.15"/>
<circle cx="1618" cy="995" r="11" fill="none" stroke="#2a7a5c" stroke-opacity="0.31"/>
<line x1="1810" y1="138" x2="1810" y2="201" stroke="#55a84f" stroke-opacity="0.31"/>
<line x1="1815" y1="804" x2="1815" y2="849" stroke="#7d7535" stroke-opacity="0.32"/>
<line x1="1793" y1="620" x2="1793" y2="651" stroke="#2a7a5c" stroke-opacity="0.30"/>
<line x1="1387" y1="35" x2="1387" y2="78" stroke="#7d7535" stroke-opacity="0.18"/>
<line x1="1409" y1="75" x2="1409" y2="122" stroke="#3f8f4a" stroke-opacity="0.17"/>
<line x1="1751" y1="465" x2="1824" y2="465" stroke="#2a7a5c" stroke-opacity="0.24"/>
<rect x="1483" y="560" width="14" height="14" fill="none" stroke="#55a84f" stroke-opacity="0.31"/>
<line x1="1501" y1="264" x2="1532" y2="264" stroke="#2a7a5c" stroke-opacity="0.20"/>
<line x1="1437" y1="920" x2="1437" y2="951" stroke="#7d7535" stroke-opacity="0.16"/>
<line x1="1489" y1="547" x2="1489" y2="627" stroke="#55a84f" stroke-opacity="0.28"/>
<rect x="1408" y="494" width="9" height="14" fill="none" stroke="#2a7a5c" stroke-opacity="0.33"/>
<circle cx="1417" cy="197" r="7" fill="none" stroke="#3f8f4a" stroke-opacity="0.34"/>
<line x1="1839" y1="467" x2="1893" y2="467" stroke="#55a84f" stroke-opacity="0.17"/>
<line x1="1700" y1="226" x2="1700" y2="306" stroke="#3f8f4a" stroke-opacity="0.16"/>
<circle cx="1372" cy="762" r="7" fill="none" stroke="#55a84f" stroke-opacity="0.31"/>
<line x1="1560" y1="646" x2="1611" y2="646" stroke="#55a84f" stroke-opacity="0.31"/>
<line x1="1386" y1="105" x2="1386" y2="126" stroke="#3f8f4a" stroke-opacity="0.28"/>
<line x1="1442" y1="723" x2="1442" y2="765" stroke="#7d7535" stroke-opacity="0.28"/>
<circle cx="1379" cy="775" r="11" fill="none" stroke="#2a7a5c" stroke-opacity="0.23"/>
<line x1="1913" y1="378" x2="1928" y2="378" stroke="#2a7a5c" stroke-opacity="0.19"/>
<rect x="1859" y="441" width="16" height="25" fill="none" stroke="#2a7a5c" stroke-opacity="0.27"/>
<line x1="1423" y1="54" x2="1479" y2="54" stroke="#2a7a5c" stroke-opacity="0.17"/>
<line x1="1560" y1="525" x2="1586" y2="525" stroke="#7d7535" stroke-opacity="0.18"/>
<rect x="1388" y="399" width="26" height="9" fill="none" stroke="#3f8f4a" stroke-opacity="0.21"/>
<line x1="1866" y1="327" x2="1866" y2="388" stroke="#2a7a5c" stroke-opacity="0.17"/>
<line x1="1739" y1="927" x2="1739" y2="982" stroke="#3f8f4a" stroke-opacity="0.27"/>
<line x1="1461" y1="492" x2="1461" y2="541" stroke="#55a84f" stroke-opacity="0.23"/>
<line x1="1567" y1="128" x2="1618" y2="128" stroke="#3f8f4a" stroke-opacity="0.16"/>
<rect x="1778" y="40" width="18" height="27" fill="none" stroke="#55a84f" stroke-opacity="0.23"/>
<line x1="1790" y1="675" x2="1847" y2="675" stroke="#3f8f4a" stroke-opacity="0.24"/>
<line x1="1602" y1="456" x2="1646" y2="456" stroke="#2a7a5c" stroke-opacity="0.24"/>
<rect x="1699" y="852" width="9" height="16" fill="none" stroke="#2a7a5c" stroke-opacity="0.23"/>
<line x1="1556" y1="834" x2="1556" y2="858" stroke="#55a84f" stroke-opacity="0.16"/>
<rect x="1871" y="326" width="19" height="16" fill="none" stroke="#55a84f" stroke-opacity="0.16"/>
<circle cx="1887" cy="142" r="12" fill="none" stroke="#55a84f" stroke-opacity="0.19"/>
<circle cx="1628" cy="995" r="10" fill="none" stroke="#3f8f4a" stroke-opacity="0.29"/>
<line x1="1475" y1="866" x2="1475" y2="940" stroke="#7d7535" stroke-opacity="0.18"/>
<line x1="1505" y1="848" x2="1537" y2="848" stroke="#2a7a5c" stroke-opacity="0.19"/>
<line x1="1636" y1="332" x2="1692" y2="332" stroke="#3f8f4a" stroke-opacity="0.23"/>
<line x1="1507" y1="341" x2="1507" y2="390" stroke="#7d7535" stroke-opacity="0.17"/>
<circle cx="1710" cy="374" r="8" fill="none" stroke="#55a84f" stroke-opacity="0.20"/>
<line x1="1834" y1="767" x2="1834" y2="820" stroke="#2a7a5c" stroke-opacity="0.35"/>
<line x1="1554" y1="795" x2="1554" y2="872" stroke="#3f8f4a" stroke-opacity="0.27"/>
<line x1="1517" y1="537" x2="1581" y2="537" stroke="#7d7535" stroke-opacity="0.30"/>
<line x1="1475" y1="303" x2="1475" y2="376" stroke="#2a7a5c" stroke-opacity="0.25"/>
<rect x="1425" y="236" width="20" height="15" fill="none" stroke="#55a84f" stroke-opacity="0.16"/>
<line x1="1646" y1="555" x2="1646" y2="584" stroke="#7d7535" stroke-opacity="0.27"/>
<line x1="1703" y1="494" x2="1747" y2="494" stroke="#3f8f4a" stroke-opacity="0.29"/>
<rect x="1386" y="150" width="14" height="8" fill="none" stroke="#7d7535" stroke-opacity="0.23"/>
<line x1="1714" y1="585" x2="1714" y2="633" stroke="#2a7a5c" stroke-opacity="0.27"/>
<line x1="1628" y1="172" x2="1670" y2="172" stroke="#55a84f" stroke-opacity="0.26"/>
<rect x="1484" y="61" width="22" height="12" fill="none" stroke="#55a84f" stroke-opacity="0.27"/>
<line x1="1583" y1="539" x2="1583" y2="565" stroke="#2a7a5c" stroke-opacity="0.31"/>
<line x1="1525" y1="312" x2="1540" y2="312" stroke="#2a7a5c" stroke-opacity="0.29"/>
<line x1="1827" y1="775" x2="1827" y2="855" stroke="#2a7a5c" stroke-opacity="0.19"/>
<line x1="1498" y1="670" x2="1530" y2="670" stroke="#7d7535" stroke-opacity="0.29"/>
<rect x="1663" y="453" width="28" height="28" fill="none" stroke="#7d7535" stroke-opacity="0.21"/>
<line x1="1398" y1="528" x2="1426" y2="528" stroke="#3f8f4a" stroke-opacity="0.32"/>
<line x1="1440" y1="952" x2="1470" y2="952" stroke="#2a7a5c" stroke-opacity="0.22"/>
<rect x="1863" y="656" width="20" height="8" fill="none" stroke="#2a7a5c" stroke-opacity="0.24"/>
<line x1="1365" y1="994" x2="1405" y2="994" stroke="#7d7535" stroke-opacity="0.31"/>
<line x1="1681" y1="588" x2="1703" y2="588" stroke="#55a84f" stroke-opacity="0.16"/>
<line x1="1875" y1="359" x2="1899" y2="359" stroke="#55a84f" stroke-opacity="0.16"/>
<line x1="1714" y1="44" x2="1767" y2="44" stroke="#55a84f" stroke-opacity="0.16"/>
<rect x="1555" y="850" width="25" height="24" fill="none" stroke="#55a84f" stroke-opacity="0.33"/>
<line x1="1567" y1="256" x2="1637" y2="256" stroke="#55a84f" stroke-opacity="0.16"/>
<rect x="1809" y="660" width="11" height="25" fill="none" stroke="#7d7535" stroke-opacity="0.25"/>
<line x1="1715" y1="306" x2="1747" y2="306" stroke="#7d7535" stroke-opacity="0.15"/>
<line x1="1510" y1="744" x2="1510" y2="799" stroke="#7d7535" stroke-opacity="0.30"/>
<rect x="1619" y="299" width="19" height="10" fill="none" stroke="#2a7a5c" stroke-opacity="0.16"/>
<line x1="1615" y1="50" x2="1615" y2="84" stroke="#55a84f" stroke-opacity="0.26"/>
<line x1="1596" y1="544" x2="1643" y2="544" stroke="#55a84f" stroke-opacity="0.15"/>
<line x1="1628" y1="829" x2="1705" y2="829" stroke="#2a7a5c" stroke-opacity="0.27"/>
<line x1="1641" y1="601" x2="1671" y2="601" stroke="#3f8f4a" stroke-opacity="0.34"/>
<rect x="1444" y="976" width="23" height="25" fill="none" stroke="#2a7a5c" stroke-opacity="0.31"/>
<line x1="1705" y1="370" x2="1705" y2="433" stroke="#2a7a5c" stroke-opacity="0.33"/>
<line x1="1589" y1="672" x2="1589" y2="745" stroke="#7d7535" stroke-opacity="0.20"/>
<circle cx="1633" cy="394" r="5" fill="none" stroke="#3f8f4a" stroke-opacity="0.34"/>
<line x1="1686" y1="717" x2="1686" y2="753" stroke="#55a84f" stroke-opacity="0.22"/>
<rect x="1438" y="877" width="18" height="25" fill="none" stroke="#7d7535" stroke-opacity="0.18"/>
<line x1="1677" y1="131" x2="1677" y2="163" stroke="#3f8f4a" stroke-opacity="0.25"/>
<line x1="1776" y1="860" x2="1776" y2="922" stroke="#3f8f4a" stroke-opacity="0.34"/>
<line x1="1691" y1="363" x2="1768" y2="363" stroke="#3f8f4a" stroke-opacity="0.20"/>
<rect x="1912" y="171" width="30" height="25" fill="none" stroke="#3f8f4a" stroke-opacity="0.23"/>
<line x1="1764" y1="452" x2="1837" y2="452" stroke="#55a84f" stroke-opacity="0.21"/>
<circle cx="1612" cy="13" r="8" fill="none" stroke="#2a7a5c" stroke-opacity="0.29"/>
<line x1="1707" y1="482" x2="1738" y2="482" stroke="#2a7a5c" stroke-opacity="0.15"/>
<line x1="1832" y1="729" x2="1832" y2="788" stroke="#2a7a5c" stroke-opacity="0.32"/>
<line x1="1719" y1="913" x2="1719" y2="969" stroke="#3f8f4a" stroke-opacity="0.29"/>
<line x1="1606" y1="326" x2="1606" y2="356" stroke="#55a84f" stroke-opacity="0.33"/>
<line x1="1576" y1="741" x2="1592" y2="741" stroke="#2a7a5c" stroke-opacity="0.25"/>
<rect x="1835" y="539" width="15" height="8" fill="none" stroke="#3f8f4a" stroke-opacity="0.33"/>
<line x1="1820" y1="945" x2="1845" y2="945" stroke="#7d7535" stroke-opacity="0.26"/>
<line x1="1792" y1="978" x2="1792" y2="1023" stroke="#55a84f" stroke-opacity="0.32"/>
<line x1="1466" y1="495" x2="1507" y2="495" stroke="#7d7535" stroke-opacity="0.25"/>
<rect x="1886" y="218" width="29" height="24" fill="none" stroke="#2a7a5c" stroke-opacity="0.25"/>
<line x1="1697" y1="663" x2="1713" y2="663" stroke="#2a7a5c" stroke-opacity="0.23"/>
<rect x="1586" y="437" width="10" height="15" fill="none" stroke="#7d7535" stroke-opacity="0.27"/>
<circle cx="1576" cy="992" r="5" fill="none" stroke="#2a7a5c" stroke-opacity="0.24"/>
<rect x="1875" y="72" width="20" height="13" fill="none" stroke="#3f8f4a" stroke-opacity="0.24"/>
<line x1="1895" y1="367" x2="1895" y2="401" stroke="#2a7a5c" stroke-opacity="0.24"/>
<rect x="1660" y="130" width="13" height="23" fill="none" stroke="#7d7535" stroke-opacity="0.31"/>
<rect x="1738" y="1022" width="24" height="14" fill="none" stroke="#2a7a5c" stroke-opacity="0.15"/>
<line x1="1488" y1="314" x2="1488" y2="334" stroke="#2a7a5c" stroke-opacity="0.27"/>
<line x1="1857" y1="159" x2="1926" y2="159" stroke="#2a7a5c" stroke-opacity="0.16"/>
<line x1="1862" y1="815" x2="1878" y2="815" stroke="#7d7535" stroke-opacity="0.28"/>
<rect x="1356" y="990" width="21" height="27" fill="none" stroke="#7d7535" stroke-opacity="0.27"/>
<rect x="1455" y="470" width="25" height="12" fill="none" stroke="#3f8f4a" stroke-opacity="0.33"/>
<rect x="1853" y="633" width="23" height="20" fill="none" stroke="#7d7535" stroke-opacity="0.19"/>
<circle cx="1769" cy="456" r="6" fill="none" stroke="#55a84f" stroke-opacity="0.20"/>
<line x1="1429" y1="513" x2="1489" y2="513" stroke="#2a7a5c" stroke-opacity="0.33"/>
<line x1="1489" y1="171" x2="1489" y2="207" stroke="#55a84f" stroke-opacity="0.18"/>
<line x1="1743" y1="518" x2="1785" y2="518" stroke="#2a7a5c" stroke-opacity="0.22"/>
<line x1="1893" y1="78" x2="1893" y2="96" stroke="#55a84f" stroke-opacity="0.15"/>
<rect x="1766" y="1039" width="19" height="28" fill="none" stroke="#55a84f" stroke-opacity="0.25"/>
<line x1="1369" y1="747" x2="1369" y2="805" stroke="#7d7535" stroke-opacity="0.17"/>
<line x1="1543" y1="810" x2="1543" y2="847" stroke="#3f8f4a" stroke-opacity="0.21"/>
<line x1="1492" y1="55" x2="1533" y2="55" stroke="#7d7535" stroke-opacity="0.32"/>
<line x1="1635" y1="283" x2="1635" y2="349" stroke="#3f8f4a" stroke-opacity="0.28"/>
<line x1="1537" y1="330" x2="1555" y2="330" stroke="#55a84f" stroke-opacity="0.31"/>
<line x1="1758" y1="921" x2="1758" y2="943" stroke="#55a84f" stroke-opacity="0.23"/>
<line x1="1376" y1="855" x2="1376" y2="929" stroke="#55a84f" stroke-opacity="0.31"/>
<line x1="1696" y1="641" x2="1696" y2="700" stroke="#55a84f" stroke-opacity="0.19"/>
<line x1="1609" y1="793" x2="1651" y2="793" stroke="#3f8f4a" stroke-opacity="0.32"/>
<line x1="1407" y1="968" x2="1458" y2="968" stroke="#3f8f4a" stroke-opacity="0.31"/>
<line x1="1496" y1="314" x2="1496" y2="366" stroke="#7d7535" stroke-opacity="0.15"/>
<line x1="1677" y1="950" x2="1677" y2="1016" stroke="#55a84f" stroke-opacity="0.31"/>
<line x1="1588" y1="724" x2="1588" y2="764" stroke="#55a84f" stroke-opacity="0.15"/>
<circle cx="1684" cy="975" r="8" fill="none" stroke="#2a7a5c" stroke-opacity="0.30"/>
<circle cx="1397" cy="491" r="4" fill="none" stroke="#55a84f" stroke-opacity="0.24"/>
<circle cx="1728" cy="1026" r="5" fill="none" stroke="#3f8f4a" stroke-opacity="0.32"/>
<line x1="1360" y1="748" x2="1399" y2="748" stroke="#3f8f4a" stroke-opacity="0.33"/>
<line x1="1772" y1="723" x2="1823" y2="723" stroke="#55a84f" stroke-opacity="0.21"/>
</svg>
<div id="shadow"></div>
<div id="win">
  <div id="tb"><div class="title">YaST2</div></div>
  <div id="side"></div>
  <div id="main"></div>
</div>
<!-- titlebar icons -->
<svg style="position:absolute;left:4px;top:4px" width="20" height="20" viewBox="0 0 20 20"><circle cx="10" cy="10" r="9" fill="#1fb8a6"/><path d="M5 11 L8 9 L12 9 L13.5 10 L14 15 L13 15 L12.5 12 L12 15 L11 15 L11 12 L9 12 L9 15 L8 15 L8 12 Z M10 9 L11.5 6.5 M11 8 L12.5 6" fill="#fff" stroke="#fff" stroke-width="0.6"/></svg>
<svg style="position:absolute;left:30px;top:5px" width="18" height="18" viewBox="30 5 18 18"><path d="M38 14 L42.7 9.3" stroke="#fff" stroke-width="4.6"/><path d="M34.3 12.2 L40 17.9" stroke="#fff" stroke-width="1.6"/><path d="M37.5 16 L33.6 19.9" stroke="#fff" stroke-width="1.6"/></svg>
<svg style="position:absolute;left:1272px;top:6px" width="72" height="18" viewBox="0 0 72 18"><path d="M5 6 L10.5 11.5 L16 6" fill="none" stroke="#fcfcfc" stroke-width="1.2"/><path d="M29 11 L34.5 5.5 L40 11" fill="none" stroke="#fcfcfc" stroke-width="1.2"/></svg>
<svg style="position:absolute;left:1320px;top:4px" width="20" height="20" viewBox="0 0 20 20"><circle cx="10" cy="10" r="9.2" fill="#fcfcfc"/><path d="M5.5 5.5 L14.5 14.5 M14.5 5.5 L5.5 14.5" stroke="#31363b" stroke-width="1.2"/></svg>

<!-- logos -->
<svg style="position:absolute;left:36px;top:46px" width="70" height="34.02" viewBox="0 0 1920 933"><path d="M140 820 C80 650 140 470 350 300 C520 170 780 110 950 115 C1100 118 1250 140 1360 175 L1380 140 L1400 170 C1550 180 1720 200 1790 300 C1830 360 1845 420 1840 440 C1835 470 1810 480 1825 500 C1800 560 1700 600 1550 610 L1310 620 C1290 680 1300 780 1350 850 C1250 800 1160 720 1100 680 C1030 620 900 600 860 650 C830 700 830 760 840 820 C780 800 720 780 680 820 C640 880 600 930 500 940 L300 940 C220 920 170 880 140 820 Z" fill="#fff"/><path d="M730 820 C700 740 680 690 680 700 C640 560 500 510 400 530 C260 560 220 690 250 780 C290 870 420 880 480 830 C530 780 510 700 440 690 C400 685 375 700 365 715" fill="none" stroke="#193d4f" stroke-width="70"/><circle cx="1650" cy="335" r="82" fill="none" stroke="#193d4f" stroke-width="45"/><circle cx="1660" cy="318" r="22" fill="#193d4f"/><path d="M1430 390 C1520 470 1640 510 1835 470" fill="none" stroke="#193d4f" stroke-width="42"/></svg>
<div style="position:absolute;left:37px;top:77px;width:70px;font-size:14px;color:#fff;line-height:16px;white-space:nowrap;letter-spacing:-0.3px"><span style="font-size:12px;color:#e8ecee">open</span><b style="font-size:14.5px;letter-spacing:0.3px">SUSE</b></div>
<div style="position:absolute;left:127px;top:43px;width:2px;height:56px;background:#fff"></div>
<svg style="position:absolute;left:156px;top:46px" width="42" height="34" viewBox="156 46 42 34"><path d="M176.7 46.4 L191 57.5 L176.7 68.6 L162.5 57.5 Z" fill="#73ba25"/><path d="M157 63.3 L160.8 60.8 L176.7 72.8 L192.8 60.5 L197 63.3 L176.7 79.2 Z" fill="#73ba25"/></svg>
<div style="position:absolute;left:161px;top:80px;font-size:14.6px;color:#73ba25;line-height:18px">Leap</div>

<div class="hd" style="top:109px">Preparation</div>
<svg class="chk" style="top:132px" viewBox="0 0 10 8"><path d="M1 4.2 L3.7 6.8 L9 1.2" fill="none" stroke="#71c12a" stroke-width="2"/></svg>
<div class="nav" style="top:127px">Network Autosetup</div>
<svg class="chk" style="top:150px" viewBox="0 0 10 8"><path d="M1 4.2 L3.7 6.8 L9 1.2" fill="none" stroke="#71c12a" stroke-width="2"/></svg>
<div class="nav" style="top:145px">Installer Update</div>
<svg class="chk" style="top:168px" viewBox="0 0 10 8"><path d="M1 4.2 L3.7 6.8 L9 1.2" fill="none" stroke="#71c12a" stroke-width="2"/></svg>
<div class="nav" style="top:163px">Repositories Initialization</div>
<svg class="chk" style="top:186px" viewBox="0 0 10 8"><path d="M1 4.2 L3.7 6.8 L9 1.2" fill="none" stroke="#71c12a" stroke-width="2"/></svg>
<div class="nav" style="top:181px">Welcome</div>
<svg class="chk" style="top:204px" viewBox="0 0 10 8"><path d="M1 4.2 L3.7 6.8 L9 1.2" fill="none" stroke="#71c12a" stroke-width="2"/></svg>
<div class="nav" style="top:199px">Network Activation</div>
<svg class="chk" style="top:222px" viewBox="0 0 10 8"><path d="M1 4.2 L3.7 6.8 L9 1.2" fill="none" stroke="#71c12a" stroke-width="2"/></svg>
<div class="nav" style="top:217px">System Analysis</div>
<svg class="chk" style="top:240px" viewBox="0 0 10 8"><path d="M2 4 H8 M5.5 1.5 L8 4 L5.5 6.5" fill="none" stroke="#fff" stroke-width="1.3"/></svg>
<div class="nav cur" style="top:235px">Online Repositories</div>
<div class="nav" style="top:253px">Add-On Products</div>
<div class="nav" style="top:271px">Disk</div>
<div class="nav" style="top:289px">Time Zone</div>
<div class="nav" style="top:307px">User Settings</div>
<div class="hd" style="top:325px">Installation</div>
<div class="nav" style="top:343px">Installation Overview</div>
<div class="nav" style="top:361px">Perform Installation</div>

<div style="position:absolute;left:268px;top:47px;font-size:24px;font-weight:bold;color:#232627;line-height:28px;transform:scaleX(0.787);transform-origin:0 0;white-space:nowrap">System Role</div>
<div class="rd" style="left:272px;top:86px">System Roles are predefined use cases which tailor the system</div>
<div class="rd" style="left:272px;top:104px">for the selected scenario.</div>

<div class="frame"></div>
<div class="box" style="top:174px;height:75px"></div>
<div class="box" style="top:255px;height:75px"></div>
<div class="box" style="top:336px;height:57px"></div>
<div class="box" style="top:399px;height:57px"></div>
<div class="box" style="top:462px;height:93px"></div>

<div class="radio" style="top:184px"></div>
<div class="rt" style="top:182px">Desktop with KDE Plasma</div>
<div class="rd" style="top:206px">Graphical system with KDE Plasma as desktop environment. Suitable for Workstations, Desktops and Laptops.</div>
<div class="radio" style="top:265px"></div>
<div class="rt" style="top:263px">Desktop with GNOME</div>
<div class="rd" style="top:287px">Graphical system with GNOME as desktop environment. Suitable for Workstations, Desktops and Laptops.</div>
<div class="radio" style="top:346px"></div>
<div class="rt" style="top:344px">Generic Desktop</div>
<div class="rd" style="top:368px">Graphical system with reduced package set. Intended as base for a customized software selection.</div>
<div class="radio" style="top:409px"></div>
<div class="rt" style="top:407px">Server</div>
<div class="rd" style="top:431px">Small set of packages suitable for servers with a text mode interface.</div>
<div class="radio" style="top:472px"></div>
<div class="rt" style="top:470px">Transactional Server</div>
<div class="rd" style="top:494px">Like the Server role but uses a read-only root filesystem to provide atomic, automatic updates of a system</div>
<div class="rd" style="top:512px">without interfering with the running system.</div>

<div class="btn" style="left:268px;top:718px"><u>H</u>elp</div>
<div class="btn" style="left:1118px;top:718px">Abo<u>r</u>t</div>
<div class="btn" style="left:1194px;top:718px"><u>B</u>ack</div>
<div class="btn" style="left:1265px;top:718px"><u>N</u>ext</div>
<div class="btn" style="left:55px;top:710px;width:118px;height:28px;line-height:27px">Re<u style="margin:0 -1.5px;padding:0 1.5px">l</u>ease Notes...</div>

<div id="task">
<div style="position:absolute;left:0;top:0;width:1920px;height:1px;background:#eef4f4"></div>
<svg style="position:absolute;left:0;top:-4px" width="80" height="40" viewBox="0 0 1920 960"><circle cx="430" cy="525" r="358" fill="none" stroke="#232627" stroke-width="46"/><path d="M70 560 C80 420 150 330 195 285 L265 325 C380 300 560 330 660 420 C700 460 705 520 695 565 C560 565 420 545 300 510 C400 585 560 625 695 628 C640 690 480 730 200 745 C120 700 75 640 70 560 Z" fill="#232627"/><circle cx="535" cy="468" r="92" fill="#dde9e9"/><circle cx="535" cy="468" r="66" fill="#232627"/><ellipse cx="530" cy="462" rx="32" ry="26" fill="#dde9e9"/></svg>
<div style="position:absolute;left:38px;top:2px;width:26px;height:15px;background:#7cc6eb"></div>
<div style="position:absolute;left:38px;top:2px;width:18px;height:11px;background:#5499c2;border:1px solid #3a78a0"></div>
<div style="position:absolute;left:38px;top:18px;width:26px;height:15px;background:#d1dbdc"></div>
<div style="position:absolute;left:71px;top:2px;width:257px;height:32px;background:#aad8ec;border-top:3px solid #66bde9"></div>
<svg style="position:absolute;left:77px;top:8px" width="20" height="20" viewBox="0 0 20 20"><circle cx="10" cy="10" r="9.8" fill="#23b9a8"/><path d="M4 10.5 L7.5 8 L12 8 L14 9.5 L14.5 15 L13 15 L12.5 12 L12 15 L10.5 15 L10.5 12 L8.5 12 L8.5 15 L7 15 L7 11.5 Z M8.5 8 L6 4.5 M10.5 8 L13 4.5" fill="#fff" stroke="#fff" stroke-width="0.7"/></svg>
<div style="position:absolute;left:104px;top:0;height:36px;line-height:36px;font-size:12px;color:#232627;padding-top:1px">YaST2</div>
<svg style="position:absolute;left:1600px;top:8px" width="22" height="20" viewBox="0 0 22 20"><path d="M10 2.5 A7.5 7.5 0 0 1 17.2 8" fill="none" stroke="#232627" stroke-width="1.1"/><path d="M9 17.5 A7.5 7.5 0 0 1 2.8 10" fill="none" stroke="#232627" stroke-width="1.1"/><path d="M2.6 11 A7.5 7.5 0 0 1 8 2.7" fill="none" stroke="#232627" stroke-width="1.1"/><path d="M10 5 L14 9 L12 9 L12 14 L8 14 L8 9 L6 9 Z" fill="#232627"/><circle cx="15" cy="15" r="3" fill="#e4404f"/></svg>
<svg style="position:absolute;left:1628px;top:9px" width="16" height="18" viewBox="0 0 16 18"><rect x="1.5" y="2.5" width="13" height="14.5" fill="none" stroke="#232627" stroke-width="1.4"/><rect x="4" y="0.5" width="8" height="4" fill="#232627"/><path d="M4 6.5 H11.5 M4 9.5 H10 M4 12.5 H7" stroke="#232627" stroke-width="1"/></svg>
<svg style="position:absolute;left:1653px;top:9px" width="18" height="18" viewBox="0 0 18 18"><rect x="1" y="6" width="2" height="6" fill="#232627"/><path d="M4 6.5 L9 1 L9 17 L4 11.5 Z" fill="#232627"/><path d="M11 6 A4 4 0 0 1 11 12" fill="none" stroke="#232627" stroke-width="1.2"/><path d="M12 2.5 A7 7 0 0 1 12 15.5" fill="none" stroke="#9aa0a4" stroke-width="1"/></svg>
<svg style="position:absolute;left:1682px;top:9px" width="12" height="18" viewBox="0 0 12 18"><path d="M1 4 L10 12.5 L6 16.5 L6 1 L10 5 L1 13.5" fill="none" stroke="#232627" stroke-width="1.2"/></svg>
<svg style="position:absolute;left:1708px;top:9px" width="12" height="18" viewBox="0 0 12 18"><rect x="2" y="0.5" width="8" height="8.5" fill="#232627"/><rect x="3.6" y="2.5" width="1" height="4.5" fill="#dfe8e9"/><rect x="7.4" y="2.5" width="1" height="4.5" fill="#dfe8e9"/><rect x="5.3" y="4.3" width="1.5" height="1.5" fill="#dfe8e9"/><rect x="1.3" y="9" width="9.4" height="7.3" fill="none" stroke="#232627" stroke-width="1.2"/><path d="M3 14 H9" stroke="#232627" stroke-width="1"/></svg>
<svg style="position:absolute;left:1731px;top:9px" width="18" height="18" viewBox="0 0 18 18"><rect x="1" y="0.6" width="3" height="5.5" fill="none" stroke="#232627" stroke-width="1.1"/><path d="M6 0.6 H16.5 V12 H5.5 M0.8 7.5 V12.5 M3 7 V13.5 C3 15.5 5 16 6 15.5 M6 16 H11 M7.5 12 V16" fill="none" stroke="#232627" stroke-width="1.1"/><rect x="4" y="11.5" width="13" height="1.5" fill="#232627"/><rect x="7" y="13" width="3.5" height="3" fill="#232627"/></svg>
<svg style="position:absolute;left:1759px;top:14px" width="14" height="8" viewBox="0 0 14 8"><path d="M1 7 L7 1 L13 7 Z" fill="#232627"/></svg>
<div style="position:absolute;left:1788px;top:1px;height:36px;line-height:37px;font-size:23px;letter-spacing:0.3px;color:#232627;white-space:nowrap">3:11 PM</div>
<div style="position:absolute;left:1890px;top:6px;width:25px;height:24px;border:1px solid #232627"></div>
<div style="position:absolute;left:1893px;top:26px;width:19px;height:1px;background:#232627"></div>
</div>
</body></html>
